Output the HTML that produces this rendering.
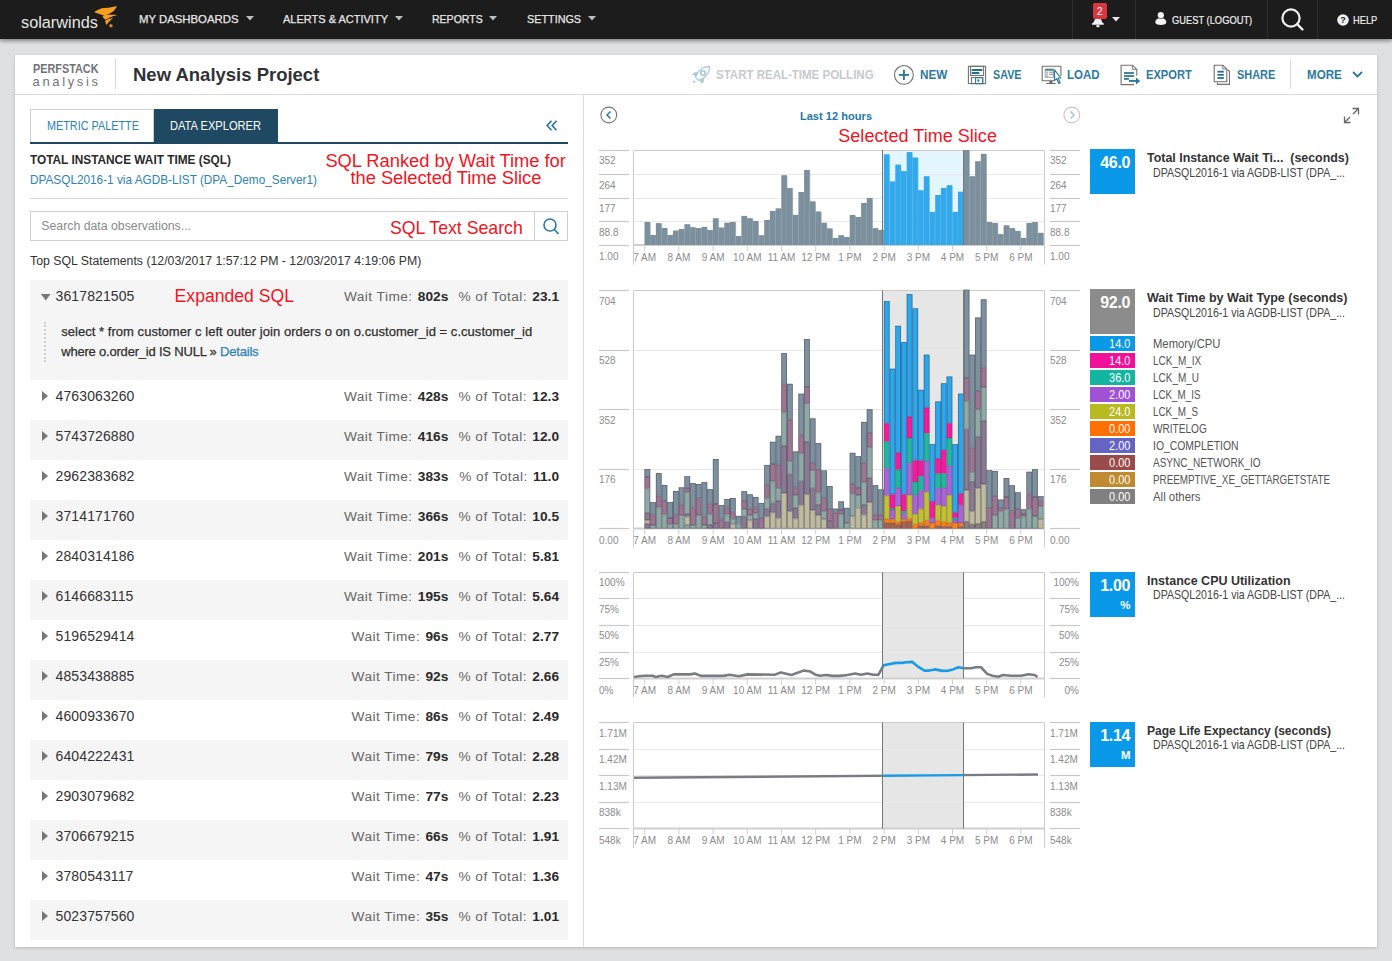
<!DOCTYPE html><html><head><meta charset="utf-8"><title>PerfStack</title>
<style>
html,body{margin:0;padding:0;}
body{width:1392px;height:961px;overflow:hidden;background:#dfe0e2;font-family:"Liberation Sans", sans-serif;position:relative;}
.t{position:absolute;white-space:pre;}
.r{position:absolute;}
svg{position:absolute;overflow:visible;}
</style></head><body>
<div class="r" style="left:0px;top:0px;width:1392px;height:39px;background:#1c1c1c;box-shadow:0 2px 4px rgba(0,0,0,0.42);"></div>
<div class="t" style="top:14.00px;font-size:16.3px;line-height:16.3px;color:#e6e6e6;font-weight:400;left:21px;">solarwinds</div>
<svg style="left:90px;top:2px" width="32" height="30" viewBox="0 0 32 30">
<path d="M4.06,10 C8,7.5 11,6 14,5.9 L18.4,5.8 C21,5.5 24,5 26.9,4.1 C26,6 25.2,7 24.6,7.9 C23.5,9 22.5,9.8 21.9,10.3 C20,11.5 19,12 17.5,12.5 C16,13 14.5,13.4 13.4,13.4 C11,12.5 9,11.8 7.8,11.6 Z" fill="#f5a01c"/>
<path d="M12.5,14.7 C14,13.3 15,12.8 16.9,12.8 C20,12.7 24,12.8 27.5,13 C25,13.8 23,14.2 21.9,14.7 C19,15.8 17,17 15.6,17.8 C14.5,17 13.5,15.8 12.5,14.7 Z" fill="#f5a01c"/>
<path d="M15,18.75 C18,17.5 20,16.8 23.1,16.1 C21.5,17.5 20,19 18.75,20 C17.8,21.2 17,22.2 16.25,23.1 C15.8,21.5 15.4,20 15,18.75 Z" fill="#f5a01c"/>
<circle cx="20.9" cy="23.75" r="1.8" fill="#c98419"/>
</svg>
<div class="t" style="top:14.00px;font-size:11.8px;line-height:11.8px;color:#e8e8e8;font-weight:400;transform:scaleX(0.9627);transform-origin:0 0;left:139px;-webkit-text-stroke:0.25px #e8e8e8;">MY DASHBOARDS</div>
<div class="t" style="top:14.00px;font-size:11.8px;line-height:11.8px;color:#e8e8e8;font-weight:400;transform:scaleX(0.9329);transform-origin:0 0;left:282.7px;-webkit-text-stroke:0.25px #e8e8e8;">ALERTS &amp; ACTIVITY</div>
<div class="t" style="top:14.00px;font-size:11.8px;line-height:11.8px;color:#e8e8e8;font-weight:400;transform:scaleX(0.8922);transform-origin:0 0;left:432.2px;-webkit-text-stroke:0.25px #e8e8e8;">REPORTS</div>
<div class="t" style="top:14.00px;font-size:11.8px;line-height:11.8px;color:#e8e8e8;font-weight:400;transform:scaleX(0.9169);transform-origin:0 0;left:527.4px;-webkit-text-stroke:0.25px #e8e8e8;">SETTINGS</div>
<svg style="left:245.7px;top:16px" width="8" height="5"><path d="M0 0 L8 0 L4 4.5Z" fill="#bdbdbd"/></svg>
<svg style="left:394.8px;top:16px" width="8" height="5"><path d="M0 0 L8 0 L4 4.5Z" fill="#bdbdbd"/></svg>
<svg style="left:489px;top:16px" width="8" height="5"><path d="M0 0 L8 0 L4 4.5Z" fill="#bdbdbd"/></svg>
<svg style="left:588px;top:16px" width="8" height="5"><path d="M0 0 L8 0 L4 4.5Z" fill="#bdbdbd"/></svg>
<div class="r" style="left:1072px;top:0px;width:1px;height:39px;background:#2e2e2e;"></div>
<div class="r" style="left:1135px;top:0px;width:1px;height:39px;background:#2e2e2e;"></div>
<div class="r" style="left:1267px;top:0px;width:1px;height:39px;background:#2e2e2e;"></div>
<div class="r" style="left:1317px;top:0px;width:1px;height:39px;background:#2e2e2e;"></div>
<div class="r" style="left:1093px;top:3px;width:13.5px;height:15.5px;background:#d9363e;border-radius:2px;"></div>
<div class="t" style="top:6.00px;font-size:10.5px;line-height:10.5px;color:#fff;font-weight:400;left:1099.75px;transform:translateX(-50%);">2</div>
<svg style="left:1092px;top:19px" width="12" height="9" viewBox="0 0 12 9">
<path d="M2.8 0.3 C4 0 8 0 9.2 0.3 C9.6 2 10 3.5 11.8 4.6 L11.8 5.8 L0 5.8 L0 4.6 C1.8 3.5 2.3 2 2.8 0.3Z" fill="#f2f2f2"/><ellipse cx="5.9" cy="7.1" rx="1.8" ry="1.2" fill="#f2f2f2"/></svg>
<svg style="left:1112px;top:16.5px" width="8" height="5"><path d="M0 0 L8 0 L4 4.5Z" fill="#e8e8e8"/></svg>
<svg style="left:1155px;top:12px" width="12" height="13" viewBox="0 0 12 13">
<circle cx="5.8" cy="3.2" r="3.1" fill="#f2f2f2"/><path d="M3.5 6.2 C4.8 6.9 6.8 6.9 8.1 6.2 C10.3 7 11.3 8.5 11.3 10.2 C11.3 12 9 12.9 5.8 12.9 C2.6 12.9 0.3 12 0.3 10.2 C0.3 8.5 1.3 7 3.5 6.2Z" fill="#f2f2f2"/></svg>
<div class="t" style="top:15.00px;font-size:11px;line-height:11px;color:#f0f0f0;font-weight:400;transform:scaleX(0.8484);transform-origin:0 0;left:1171.8px;-webkit-text-stroke:0.2px #f0f0f0;">GUEST (LOGOUT)</div>
<svg style="left:1281px;top:8px" width="24" height="24" viewBox="0 0 24 24">
<circle cx="10" cy="10" r="8.6" fill="none" stroke="#f0f0f0" stroke-width="2.2"/><line x1="16.2" y1="16.2" x2="21.5" y2="21.5" stroke="#f0f0f0" stroke-width="2.4" stroke-linecap="round"/></svg>
<svg style="left:1337px;top:13.5px" width="12" height="12" viewBox="0 0 12 12">
<circle cx="6" cy="6" r="5.8" fill="#f0f0f0"/><text x="6" y="9.2" font-family="Liberation Sans" font-weight="700" font-size="9" text-anchor="middle" fill="#1c1c1c">?</text></svg>
<div class="t" style="top:15.00px;font-size:11px;line-height:11px;color:#f0f0f0;font-weight:400;transform:scaleX(0.8452);transform-origin:0 0;left:1352.7px;-webkit-text-stroke:0.2px #f0f0f0;">HELP</div>
<div class="r" style="left:15px;top:55px;width:1362px;height:892px;background:#fff;box-shadow:0 1px 3px rgba(0,0,0,0.18);"></div>
<div class="r" style="left:15px;top:94px;width:1362px;height:1px;background:#dcdcdc;"></div>
<div class="t" style="top:63.00px;font-size:12.5px;line-height:12.5px;color:#6f7378;font-weight:700;transform:scaleX(0.8679);transform-origin:0 0;left:32.5px;">PERFSTACK</div>
<div class="t" style="top:75.00px;font-size:13px;line-height:13px;color:#6f7378;font-weight:400;letter-spacing:2.65px;left:32.5px;">analysis</div>
<div class="r" style="left:115px;top:59px;width:1px;height:30px;background:#d6d6d6;"></div>
<div class="t" style="top:66.00px;font-size:18.4px;line-height:18.4px;color:#303336;font-weight:700;transform:scaleX(1.0052);transform-origin:0 0;left:132.5px;">New Analysis Project</div>
<div class="t" style="top:68.00px;font-size:13px;line-height:13px;color:#c5cacd;font-weight:700;transform:scaleX(0.8847);transform-origin:0 0;left:716px;">START REAL-TIME POLLING</div>
<svg style="left:690px;top:64px" width="22" height="22" viewBox="690 64 22 22"><path d="M709.6 66.6 C705 66.6 700.5 68.5 698.2 72 L695.4 77.1 L698.6 80.5 L703.5 78 C707.5 75.5 709.6 71 709.6 66.6 Z" fill="none" stroke="#a6cad6" stroke-width="1.25" stroke-linejoin="round"/>
<circle cx="703" cy="73" r="2.3" fill="none" stroke="#a6cad6" stroke-width="1.6"/>
<path d="M692.2 74.5 L694.7 72.3 L697.9 72.3 L696.2 76.3 Z" fill="#a6cad6"/><path d="M700 80 L703.8 78.3 L703.8 81.6 L701.4 83.9 Z" fill="#a6cad6"/>
<path d="M693.1 80 L693.1 82.8 L696.3 82.2 Z" fill="#a6cad6"/></svg>
<div class="t" style="top:68.00px;font-size:13px;line-height:13px;color:#2b7a9e;font-weight:700;transform:scaleX(0.9030);transform-origin:0 0;left:919.6px;">NEW</div>
<svg style="left:892px;top:63px" width="24" height="24" viewBox="892 63 24 24"><circle cx="903.9" cy="74.9" r="9.4" fill="none" stroke="#707070" stroke-width="1.1"/>
<line x1="903.9" y1="69.8" x2="903.9" y2="80" stroke="#2b7a9e" stroke-width="1.9"/><line x1="898.8" y1="74.9" x2="909" y2="74.9" stroke="#2b7a9e" stroke-width="1.9"/></svg>
<div class="t" style="top:68.00px;font-size:13px;line-height:13px;color:#2b7a9e;font-weight:700;transform:scaleX(0.8276);transform-origin:0 0;left:992.5px;">SAVE</div>
<svg style="left:966px;top:64px" width="22" height="22" viewBox="966 64 22 22"><rect x="968.4" y="66.3" width="17.2" height="17.3" fill="none" stroke="#707070" stroke-width="1.05"/>
<rect x="970.6" y="66.3" width="13" height="9.2" fill="none" stroke="#707070" stroke-width="1.05"/>
<line x1="972.4" y1="70" x2="981.7" y2="70" stroke="#1f6f92" stroke-width="1.8" stroke-linecap="round"/><line x1="972.4" y1="73" x2="978.7" y2="73" stroke="#1f6f92" stroke-width="1.8" stroke-linecap="round"/>
<rect x="971.5" y="77.6" width="11.2" height="6" fill="none" stroke="#707070" stroke-width="1.05"/>
<rect x="975.6" y="77.6" width="7.1" height="6" fill="none" stroke="#2b7a9e" stroke-width="1.1"/><rect x="977.5" y="79.4" width="1.8" height="2.3" fill="#1f6f92"/></svg>
<div class="t" style="top:68.00px;font-size:13px;line-height:13px;color:#2b7a9e;font-weight:700;transform:scaleX(0.8848);transform-origin:0 0;left:1067px;">LOAD</div>
<svg style="left:1040px;top:64px" width="24" height="22" viewBox="1040 64 24 22"><path d="M1054 80.7 L1042.2 80.7 L1042.2 66.2 L1060.9 66.2 L1060.9 76" fill="none" stroke="#707070" stroke-width="1.1"/>
<rect x="1049.3" y="80.7" width="3.2" height="2.6" fill="#707070"/><line x1="1046.2" y1="83.5" x2="1055.7" y2="83.5" stroke="#707070" stroke-width="1.1"/>
<rect x="1045.2" y="69" width="8" height="1.7" fill="#2b7a9e"/><rect x="1045.2" y="69" width="8.3" height="8.2" fill="none" stroke="#8a8a8a" stroke-width="0.8"/>
<line x1="1046.3" y1="72.2" x2="1048.2" y2="72.2" stroke="#777" stroke-width="0.9"/><line x1="1049.2" y1="72.2" x2="1053" y2="72.2" stroke="#777" stroke-width="0.9"/>
<line x1="1046.3" y1="74.3" x2="1048.2" y2="74.3" stroke="#777" stroke-width="0.9"/><line x1="1049.2" y1="74.3" x2="1053" y2="74.3" stroke="#777" stroke-width="0.9"/>
<line x1="1046.3" y1="76.3" x2="1048.2" y2="76.3" stroke="#777" stroke-width="0.9"/>
<path d="M1054.5 69.8 L1054.5 80.6 L1056.6 78.6 L1058.8 83.5 L1060.2 82.9 L1058.1 78 L1060.9 78 Z" fill="#fff" stroke="#2b7a9e" stroke-width="1.15" stroke-linejoin="round"/></svg>
<div class="t" style="top:68.00px;font-size:13px;line-height:13px;color:#2b7a9e;font-weight:700;transform:scaleX(0.8547);transform-origin:0 0;left:1145.7px;">EXPORT</div>
<svg style="left:1119px;top:63px" width="24" height="24" viewBox="1119 63 24 24"><path d="M1136.8 75.7 L1136.8 69.4 L1132.5 65.2 L1121.1 65.2 L1121.1 84.6 L1134 84.6" fill="none" stroke="#707070" stroke-width="1.1"/>
<path d="M1132.5 65.2 L1132.5 69.4 L1136.8 69.4" fill="none" stroke="#707070" stroke-width="0.9"/>
<line x1="1124" y1="73" x2="1133.9" y2="73" stroke="#1f6f92" stroke-width="1.7"/><line x1="1124" y1="76" x2="1133.9" y2="76" stroke="#1f6f92" stroke-width="1.7"/>
<line x1="1124" y1="78.9" x2="1128.9" y2="78.9" stroke="#1f6f92" stroke-width="1.7"/>
<line x1="1128.9" y1="80.9" x2="1136.5" y2="80.9" stroke="#2b7a9e" stroke-width="2"/><path d="M1136 77.4 L1140.2 80.9 L1136 84.4 Z" fill="#2b7a9e"/></svg>
<div class="t" style="top:68.00px;font-size:13px;line-height:13px;color:#2b7a9e;font-weight:700;transform:scaleX(0.8415);transform-origin:0 0;left:1236.7px;">SHARE</div>
<svg style="left:1212px;top:63px" width="20" height="24" viewBox="1212 63 20 24"><path d="M1222.8 65.2 L1214.2 65.2 L1214.2 81.7 L1226.8 81.7 L1226.8 69 Z" fill="none" stroke="#707070" stroke-width="1.1"/>
<path d="M1222.8 65.2 L1222.8 69 L1226.8 69" fill="none" stroke="#707070" stroke-width="0.9"/>
<path d="M1227.5 69.8 L1229.5 71.3 L1229.5 84.4 L1217.4 84.4 L1217.4 82.6" fill="none" stroke="#707070" stroke-width="1.1"/>
<line x1="1217.4" y1="71.7" x2="1223.8" y2="71.7" stroke="#1f6f92" stroke-width="1.8"/><line x1="1217.4" y1="74.8" x2="1223.8" y2="74.8" stroke="#1f6f92" stroke-width="1.8"/><line x1="1217.4" y1="78" x2="1223.8" y2="78" stroke="#1f6f92" stroke-width="1.8"/></svg>
<div class="r" style="left:1290px;top:59px;width:1px;height:30px;background:#dcdcdc;"></div>
<div class="t" style="top:68.00px;font-size:13px;line-height:13px;color:#2b7a9e;font-weight:700;transform:scaleX(0.8923);transform-origin:0 0;left:1307px;">MORE</div>
<svg style="left:1352px;top:71px" width="11" height="7"><path d="M1 1 L5.5 5.5 L10 1" fill="none" stroke="#2b7a9e" stroke-width="1.8"/></svg>
<div class="r" style="left:583px;top:95px;width:1px;height:852px;background:#dcdcdc;"></div>
<div class="r" style="left:30px;top:109px;width:124px;height:33px;background:#fff;box-sizing:border-box;border:1px solid #d0d0d0;border-bottom:none;"></div>
<div class="r" style="left:154px;top:109px;width:124px;height:33px;background:#1f4863;"></div>
<div class="r" style="left:30px;top:141.5px;width:538px;height:2.5px;background:#1f4863;"></div>
<div class="t" style="top:119.00px;font-size:13px;line-height:13px;color:#2e82b5;font-weight:400;transform:scaleX(0.8333);transform-origin:0 0;left:46.8px;">METRIC PALETTE</div>
<div class="t" style="top:119.00px;font-size:13px;line-height:13px;color:#ffffff;font-weight:400;transform:scaleX(0.8550);transform-origin:0 0;left:170px;">DATA EXPLORER</div>
<svg style="left:546px;top:120px" width="12" height="11" viewBox="0 0 12 11"><path d="M5.5 0.8 L1.2 5.5 L5.5 10.2 M10.5 0.8 L6.2 5.5 L10.5 10.2" fill="none" stroke="#2b7a9e" stroke-width="1.7"/></svg>
<div class="t" style="top:154.00px;font-size:12.1px;line-height:12.1px;color:#2a2a2a;font-weight:700;transform:scaleX(0.9788);transform-origin:0 0;left:30px;">TOTAL INSTANCE WAIT TIME (SQL)</div>
<div class="t" style="top:174.00px;font-size:12.1px;line-height:12.1px;color:#2e82b5;font-weight:400;transform:scaleX(0.9748);transform-origin:0 0;left:30px;">DPASQL2016-1 via AGDB-LIST (DPA_Demo_Server1)</div>
<div class="r" style="left:30px;top:197.5px;width:538px;height:1px;background:#d8d8d8;"></div>
<div class="t" style="top:152.00px;font-size:18.3px;line-height:18.3px;color:#f0141e;font-weight:400;left:325.4px;">SQL Ranked by Wait Time for</div>
<div class="t" style="top:169.00px;font-size:18.3px;line-height:18.3px;color:#f0141e;font-weight:400;left:350.4px;">the Selected Time Slice</div>
<div class="r" style="left:30px;top:211px;width:538px;height:30px;background:#fff;box-sizing:border-box;border:1px solid #d0d0d0;"></div>
<div class="r" style="left:534px;top:211px;width:1px;height:30px;background:#d0d0d0;"></div>
<div class="t" style="top:220.00px;font-size:12.3px;line-height:12.3px;color:#8a8a8a;font-weight:400;left:41.3px;">Search data observations...</div>
<div class="t" style="top:220.00px;font-size:17.7px;line-height:17.7px;color:#f0141e;font-weight:400;left:390px;">SQL Text Search</div>
<svg style="left:543px;top:218px" width="17" height="18" viewBox="0 0 17 18"><circle cx="7" cy="7" r="6" fill="none" stroke="#2b7a9e" stroke-width="1.6"/><line x1="11.3" y1="11.5" x2="15.5" y2="16" stroke="#2b7a9e" stroke-width="1.8"/></svg>
<div class="t" style="top:255.00px;font-size:12.3px;line-height:12.3px;color:#333;font-weight:400;left:30px;">Top SQL Statements (12/03/2017 1:57:12 PM - 12/03/2017 4:19:06 PM)</div>
<div class="r" style="left:30px;top:280px;width:538px;height:100px;background:#f5f5f5;"></div>
<svg style="left:40.5px;top:293.5px" width="10" height="7"><path d="M0 0 L9.5 0 L4.75 6.5Z" fill="#777"/></svg>
<div class="t" style="top:289.00px;font-size:14px;line-height:14px;color:#333;font-weight:400;letter-spacing:0.1px;left:55.6px;">3617821505</div>
<div class="t" style="top:290.00px;font-size:13.7px;line-height:13.7px;color:#666;font-weight:400;right:943.7px;"><span style="letter-spacing:0.45px">Wait Time:</span><b style="margin-left:5.3px;color:#2a2a2a">802s</b></div>
<div class="t" style="top:290.00px;font-size:13.7px;line-height:13.7px;color:#666;font-weight:400;right:833px;"><span style="letter-spacing:0.45px">% of Total:</span><b style="margin-left:5.3px;color:#2a2a2a">23.1</b></div>
<svg style="left:42px;top:391px" width="7" height="11"><path d="M0 0 L6 5 L0 10Z" fill="#777"/></svg>
<div class="t" style="top:389.00px;font-size:14px;line-height:14px;color:#333;font-weight:400;letter-spacing:0.1px;left:55.6px;">4763063260</div>
<div class="t" style="top:390.00px;font-size:13.7px;line-height:13.7px;color:#666;font-weight:400;right:943.7px;"><span style="letter-spacing:0.45px">Wait Time:</span><b style="margin-left:5.3px;color:#2a2a2a">428s</b></div>
<div class="t" style="top:390.00px;font-size:13.7px;line-height:13.7px;color:#666;font-weight:400;right:833px;"><span style="letter-spacing:0.45px">% of Total:</span><b style="margin-left:5.3px;color:#2a2a2a">12.3</b></div>
<div class="r" style="left:30px;top:420px;width:538px;height:40px;background:#f5f5f5;"></div>
<svg style="left:42px;top:431px" width="7" height="11"><path d="M0 0 L6 5 L0 10Z" fill="#777"/></svg>
<div class="t" style="top:429.00px;font-size:14px;line-height:14px;color:#333;font-weight:400;letter-spacing:0.1px;left:55.6px;">5743726880</div>
<div class="t" style="top:430.00px;font-size:13.7px;line-height:13.7px;color:#666;font-weight:400;right:943.7px;"><span style="letter-spacing:0.45px">Wait Time:</span><b style="margin-left:5.3px;color:#2a2a2a">416s</b></div>
<div class="t" style="top:430.00px;font-size:13.7px;line-height:13.7px;color:#666;font-weight:400;right:833px;"><span style="letter-spacing:0.45px">% of Total:</span><b style="margin-left:5.3px;color:#2a2a2a">12.0</b></div>
<svg style="left:42px;top:471px" width="7" height="11"><path d="M0 0 L6 5 L0 10Z" fill="#777"/></svg>
<div class="t" style="top:469.00px;font-size:14px;line-height:14px;color:#333;font-weight:400;letter-spacing:0.1px;left:55.6px;">2962383682</div>
<div class="t" style="top:470.00px;font-size:13.7px;line-height:13.7px;color:#666;font-weight:400;right:943.7px;"><span style="letter-spacing:0.45px">Wait Time:</span><b style="margin-left:5.3px;color:#2a2a2a">383s</b></div>
<div class="t" style="top:470.00px;font-size:13.7px;line-height:13.7px;color:#666;font-weight:400;right:833px;"><span style="letter-spacing:0.45px">% of Total:</span><b style="margin-left:5.3px;color:#2a2a2a">11.0</b></div>
<div class="r" style="left:30px;top:500px;width:538px;height:40px;background:#f5f5f5;"></div>
<svg style="left:42px;top:511px" width="7" height="11"><path d="M0 0 L6 5 L0 10Z" fill="#777"/></svg>
<div class="t" style="top:509.00px;font-size:14px;line-height:14px;color:#333;font-weight:400;letter-spacing:0.1px;left:55.6px;">3714171760</div>
<div class="t" style="top:510.00px;font-size:13.7px;line-height:13.7px;color:#666;font-weight:400;right:943.7px;"><span style="letter-spacing:0.45px">Wait Time:</span><b style="margin-left:5.3px;color:#2a2a2a">366s</b></div>
<div class="t" style="top:510.00px;font-size:13.7px;line-height:13.7px;color:#666;font-weight:400;right:833px;"><span style="letter-spacing:0.45px">% of Total:</span><b style="margin-left:5.3px;color:#2a2a2a">10.5</b></div>
<svg style="left:42px;top:551px" width="7" height="11"><path d="M0 0 L6 5 L0 10Z" fill="#777"/></svg>
<div class="t" style="top:549.00px;font-size:14px;line-height:14px;color:#333;font-weight:400;letter-spacing:0.1px;left:55.6px;">2840314186</div>
<div class="t" style="top:550.00px;font-size:13.7px;line-height:13.7px;color:#666;font-weight:400;right:943.7px;"><span style="letter-spacing:0.45px">Wait Time:</span><b style="margin-left:5.3px;color:#2a2a2a">201s</b></div>
<div class="t" style="top:550.00px;font-size:13.7px;line-height:13.7px;color:#666;font-weight:400;right:833px;"><span style="letter-spacing:0.45px">% of Total:</span><b style="margin-left:5.3px;color:#2a2a2a">5.81</b></div>
<div class="r" style="left:30px;top:580px;width:538px;height:40px;background:#f5f5f5;"></div>
<svg style="left:42px;top:591px" width="7" height="11"><path d="M0 0 L6 5 L0 10Z" fill="#777"/></svg>
<div class="t" style="top:589.00px;font-size:14px;line-height:14px;color:#333;font-weight:400;letter-spacing:0.1px;left:55.6px;">6146683115</div>
<div class="t" style="top:590.00px;font-size:13.7px;line-height:13.7px;color:#666;font-weight:400;right:943.7px;"><span style="letter-spacing:0.45px">Wait Time:</span><b style="margin-left:5.3px;color:#2a2a2a">195s</b></div>
<div class="t" style="top:590.00px;font-size:13.7px;line-height:13.7px;color:#666;font-weight:400;right:833px;"><span style="letter-spacing:0.45px">% of Total:</span><b style="margin-left:5.3px;color:#2a2a2a">5.64</b></div>
<svg style="left:42px;top:631px" width="7" height="11"><path d="M0 0 L6 5 L0 10Z" fill="#777"/></svg>
<div class="t" style="top:629.00px;font-size:14px;line-height:14px;color:#333;font-weight:400;letter-spacing:0.1px;left:55.6px;">5196529414</div>
<div class="t" style="top:630.00px;font-size:13.7px;line-height:13.7px;color:#666;font-weight:400;right:943.7px;"><span style="letter-spacing:0.45px">Wait Time:</span><b style="margin-left:5.3px;color:#2a2a2a">96s</b></div>
<div class="t" style="top:630.00px;font-size:13.7px;line-height:13.7px;color:#666;font-weight:400;right:833px;"><span style="letter-spacing:0.45px">% of Total:</span><b style="margin-left:5.3px;color:#2a2a2a">2.77</b></div>
<div class="r" style="left:30px;top:660px;width:538px;height:40px;background:#f5f5f5;"></div>
<svg style="left:42px;top:671px" width="7" height="11"><path d="M0 0 L6 5 L0 10Z" fill="#777"/></svg>
<div class="t" style="top:669.00px;font-size:14px;line-height:14px;color:#333;font-weight:400;letter-spacing:0.1px;left:55.6px;">4853438885</div>
<div class="t" style="top:670.00px;font-size:13.7px;line-height:13.7px;color:#666;font-weight:400;right:943.7px;"><span style="letter-spacing:0.45px">Wait Time:</span><b style="margin-left:5.3px;color:#2a2a2a">92s</b></div>
<div class="t" style="top:670.00px;font-size:13.7px;line-height:13.7px;color:#666;font-weight:400;right:833px;"><span style="letter-spacing:0.45px">% of Total:</span><b style="margin-left:5.3px;color:#2a2a2a">2.66</b></div>
<svg style="left:42px;top:711px" width="7" height="11"><path d="M0 0 L6 5 L0 10Z" fill="#777"/></svg>
<div class="t" style="top:709.00px;font-size:14px;line-height:14px;color:#333;font-weight:400;letter-spacing:0.1px;left:55.6px;">4600933670</div>
<div class="t" style="top:710.00px;font-size:13.7px;line-height:13.7px;color:#666;font-weight:400;right:943.7px;"><span style="letter-spacing:0.45px">Wait Time:</span><b style="margin-left:5.3px;color:#2a2a2a">86s</b></div>
<div class="t" style="top:710.00px;font-size:13.7px;line-height:13.7px;color:#666;font-weight:400;right:833px;"><span style="letter-spacing:0.45px">% of Total:</span><b style="margin-left:5.3px;color:#2a2a2a">2.49</b></div>
<div class="r" style="left:30px;top:740px;width:538px;height:40px;background:#f5f5f5;"></div>
<svg style="left:42px;top:751px" width="7" height="11"><path d="M0 0 L6 5 L0 10Z" fill="#777"/></svg>
<div class="t" style="top:749.00px;font-size:14px;line-height:14px;color:#333;font-weight:400;letter-spacing:0.1px;left:55.6px;">6404222431</div>
<div class="t" style="top:750.00px;font-size:13.7px;line-height:13.7px;color:#666;font-weight:400;right:943.7px;"><span style="letter-spacing:0.45px">Wait Time:</span><b style="margin-left:5.3px;color:#2a2a2a">79s</b></div>
<div class="t" style="top:750.00px;font-size:13.7px;line-height:13.7px;color:#666;font-weight:400;right:833px;"><span style="letter-spacing:0.45px">% of Total:</span><b style="margin-left:5.3px;color:#2a2a2a">2.28</b></div>
<svg style="left:42px;top:791px" width="7" height="11"><path d="M0 0 L6 5 L0 10Z" fill="#777"/></svg>
<div class="t" style="top:789.00px;font-size:14px;line-height:14px;color:#333;font-weight:400;letter-spacing:0.1px;left:55.6px;">2903079682</div>
<div class="t" style="top:790.00px;font-size:13.7px;line-height:13.7px;color:#666;font-weight:400;right:943.7px;"><span style="letter-spacing:0.45px">Wait Time:</span><b style="margin-left:5.3px;color:#2a2a2a">77s</b></div>
<div class="t" style="top:790.00px;font-size:13.7px;line-height:13.7px;color:#666;font-weight:400;right:833px;"><span style="letter-spacing:0.45px">% of Total:</span><b style="margin-left:5.3px;color:#2a2a2a">2.23</b></div>
<div class="r" style="left:30px;top:820px;width:538px;height:40px;background:#f5f5f5;"></div>
<svg style="left:42px;top:831px" width="7" height="11"><path d="M0 0 L6 5 L0 10Z" fill="#777"/></svg>
<div class="t" style="top:829.00px;font-size:14px;line-height:14px;color:#333;font-weight:400;letter-spacing:0.1px;left:55.6px;">3706679215</div>
<div class="t" style="top:830.00px;font-size:13.7px;line-height:13.7px;color:#666;font-weight:400;right:943.7px;"><span style="letter-spacing:0.45px">Wait Time:</span><b style="margin-left:5.3px;color:#2a2a2a">66s</b></div>
<div class="t" style="top:830.00px;font-size:13.7px;line-height:13.7px;color:#666;font-weight:400;right:833px;"><span style="letter-spacing:0.45px">% of Total:</span><b style="margin-left:5.3px;color:#2a2a2a">1.91</b></div>
<svg style="left:42px;top:871px" width="7" height="11"><path d="M0 0 L6 5 L0 10Z" fill="#777"/></svg>
<div class="t" style="top:869.00px;font-size:14px;line-height:14px;color:#333;font-weight:400;letter-spacing:0.1px;left:55.6px;">3780543117</div>
<div class="t" style="top:870.00px;font-size:13.7px;line-height:13.7px;color:#666;font-weight:400;right:943.7px;"><span style="letter-spacing:0.45px">Wait Time:</span><b style="margin-left:5.3px;color:#2a2a2a">47s</b></div>
<div class="t" style="top:870.00px;font-size:13.7px;line-height:13.7px;color:#666;font-weight:400;right:833px;"><span style="letter-spacing:0.45px">% of Total:</span><b style="margin-left:5.3px;color:#2a2a2a">1.36</b></div>
<div class="r" style="left:30px;top:900px;width:538px;height:40px;background:#f5f5f5;"></div>
<svg style="left:42px;top:911px" width="7" height="11"><path d="M0 0 L6 5 L0 10Z" fill="#777"/></svg>
<div class="t" style="top:909.00px;font-size:14px;line-height:14px;color:#333;font-weight:400;letter-spacing:0.1px;left:55.6px;">5023757560</div>
<div class="t" style="top:910.00px;font-size:13.7px;line-height:13.7px;color:#666;font-weight:400;right:943.7px;"><span style="letter-spacing:0.45px">Wait Time:</span><b style="margin-left:5.3px;color:#2a2a2a">35s</b></div>
<div class="t" style="top:910.00px;font-size:13.7px;line-height:13.7px;color:#666;font-weight:400;right:833px;"><span style="letter-spacing:0.45px">% of Total:</span><b style="margin-left:5.3px;color:#2a2a2a">1.01</b></div>
<div class="t" style="top:288.00px;font-size:17.6px;line-height:17.6px;color:#f0141e;font-weight:400;left:174.6px;">Expanded SQL</div>
<div class="r" style="left:44px;top:322px;width:0;height:40px;border-left:2px dotted #cfcfcf;"></div>
<div class="t" style="top:325.00px;font-size:13px;line-height:13px;color:#2f2f2f;font-weight:400;letter-spacing:0.04px;left:61.2px;-webkit-text-stroke:0.25px #2f2f2f;">select * from customer c left outer join orders o on o.customer_id = c.customer_id</div>
<div class="t" style="top:345.00px;font-size:13px;line-height:13px;color:#2f2f2f;font-weight:400;letter-spacing:-0.2px;left:61.2px;-webkit-text-stroke:0.25px currentColor;">where o.order_id IS NULL » <span style="color:#2e82b5">Details</span></div>
<svg style="left:600px;top:106px" width="18" height="18" viewBox="0 0 18 18"><circle cx="8.8" cy="9" r="7.9" fill="none" stroke="#777" stroke-width="1.1"/><path d="M10.5 5.5 L7 9 L10.5 12.5" fill="none" stroke="#2b7a9e" stroke-width="1.5"/></svg>
<svg style="left:1063px;top:106px" width="18" height="18" viewBox="0 0 18 18"><circle cx="8.8" cy="9" r="7.9" fill="none" stroke="#c8c8c8" stroke-width="1.1"/><path d="M7.5 5.5 L11 9 L7.5 12.5" fill="none" stroke="#a9c8d6" stroke-width="1.5"/></svg>
<div class="t" style="top:111.00px;font-size:11px;line-height:11px;color:#2377a5;font-weight:700;letter-spacing:0.05px;left:799.9px;">Last 12 hours</div>
<div class="t" style="top:127.00px;font-size:18px;line-height:18px;color:#f0141e;font-weight:400;letter-spacing:0.03px;left:838.3px;">Selected Time Slice</div>
<svg style="left:1343px;top:107px" width="17" height="17" viewBox="0 0 17 17"><path d="M9.5 1.5 L15.5 1.5 L15.5 7.5 M15.5 1.5 L10 7 M7.5 15.5 L1.5 15.5 L1.5 9.5 M1.5 15.5 L7 10" fill="none" stroke="#666" stroke-width="1.3"/></svg>
<svg style="left:584px;top:95px" width="793" height="852" viewBox="584 95 793 852"><style>.ax{font-family:"Liberation Sans",sans-serif;font-size:10px;fill:#8c8c8c}</style><rect x="882.5" y="150" width="81.0" height="95" fill="#e3f6fd"/><line x1="599" y1="150.5" x2="629" y2="150.5" stroke="#c8c8c8" stroke-width="1.2"/><line x1="1050" y1="150.5" x2="1080" y2="150.5" stroke="#c8c8c8" stroke-width="1.2"/><line x1="599" y1="174.5" x2="629" y2="174.5" stroke="#c8c8c8" stroke-width="1.2"/><line x1="1050" y1="174.5" x2="1080" y2="174.5" stroke="#c8c8c8" stroke-width="1.2"/><line x1="599" y1="198.5" x2="629" y2="198.5" stroke="#c8c8c8" stroke-width="1.2"/><line x1="1050" y1="198.5" x2="1080" y2="198.5" stroke="#c8c8c8" stroke-width="1.2"/><line x1="599" y1="221.5" x2="629" y2="221.5" stroke="#c8c8c8" stroke-width="1.2"/><line x1="1050" y1="221.5" x2="1080" y2="221.5" stroke="#c8c8c8" stroke-width="1.2"/><line x1="599" y1="245.5" x2="629" y2="245.5" stroke="#c8c8c8" stroke-width="1.2"/><line x1="1050" y1="245.5" x2="1080" y2="245.5" stroke="#c8c8c8" stroke-width="1.2"/><line x1="634" y1="174.5" x2="1044.5" y2="174.5" stroke="#e9e9e9" stroke-width="1"/><line x1="634" y1="198.5" x2="1044.5" y2="198.5" stroke="#e9e9e9" stroke-width="1"/><line x1="634" y1="221.5" x2="1044.5" y2="221.5" stroke="#e9e9e9" stroke-width="1"/><line x1="634" y1="150.5" x2="1044.5" y2="150.5" stroke="#cccccc" stroke-width="1.1"/><line x1="633.5" y1="150.5" x2="633.5" y2="264.5" stroke="#cccccc" stroke-width="1.1"/><line x1="1044.5" y1="150.5" x2="1044.5" y2="264.5" stroke="#cccccc" stroke-width="1.1"/><text x="599" y="164" class="ax">352</text><text x="1050" y="164" class="ax">352</text><text x="599" y="188.5" class="ax">264</text><text x="1050" y="188.5" class="ax">264</text><text x="599" y="212" class="ax">177</text><text x="1050" y="212" class="ax">177</text><text x="599" y="235.5" class="ax">88.8</text><text x="1050" y="235.5" class="ax">88.8</text><text x="599" y="260" class="ax">1.00</text><text x="1050" y="260" class="ax">1.00</text><line x1="634" y1="245" x2="1044.5" y2="245" stroke="#cfcfcf" stroke-width="2"/><rect x="644.50" y="221.9" width="5.70" height="23.10" fill="#7b8f9c"/><line x1="650.20" y1="222.9" x2="650.20" y2="245" stroke="#8ea4b3" stroke-width="0.6"/><rect x="650.20" y="235" width="5.70" height="10.00" fill="#7b8f9c"/><line x1="655.90" y1="236" x2="655.90" y2="245" stroke="#8ea4b3" stroke-width="0.6"/><rect x="655.90" y="223.1" width="5.70" height="21.90" fill="#7b8f9c"/><line x1="661.60" y1="224.1" x2="661.60" y2="245" stroke="#8ea4b3" stroke-width="0.6"/><rect x="661.60" y="228" width="5.70" height="17.00" fill="#7b8f9c"/><line x1="667.30" y1="229" x2="667.30" y2="245" stroke="#8ea4b3" stroke-width="0.6"/><rect x="667.30" y="235" width="5.70" height="10.00" fill="#7b8f9c"/><line x1="673.00" y1="236" x2="673.00" y2="245" stroke="#8ea4b3" stroke-width="0.6"/><rect x="673.00" y="230.5" width="5.70" height="14.50" fill="#7b8f9c"/><line x1="678.70" y1="231.5" x2="678.70" y2="245" stroke="#8ea4b3" stroke-width="0.6"/><rect x="678.70" y="229" width="5.70" height="16.00" fill="#7b8f9c"/><line x1="684.40" y1="230" x2="684.40" y2="245" stroke="#8ea4b3" stroke-width="0.6"/><rect x="684.40" y="224.2" width="5.70" height="20.80" fill="#7b8f9c"/><line x1="690.10" y1="225.2" x2="690.10" y2="245" stroke="#8ea4b3" stroke-width="0.6"/><rect x="690.10" y="227.2" width="5.70" height="17.80" fill="#7b8f9c"/><line x1="695.80" y1="228.2" x2="695.80" y2="245" stroke="#8ea4b3" stroke-width="0.6"/><rect x="695.80" y="228" width="5.70" height="17.00" fill="#7b8f9c"/><line x1="701.50" y1="229" x2="701.50" y2="245" stroke="#8ea4b3" stroke-width="0.6"/><rect x="701.50" y="226.9" width="5.70" height="18.10" fill="#7b8f9c"/><line x1="707.20" y1="227.9" x2="707.20" y2="245" stroke="#8ea4b3" stroke-width="0.6"/><rect x="707.20" y="230" width="5.70" height="15.00" fill="#7b8f9c"/><line x1="712.90" y1="231" x2="712.90" y2="245" stroke="#8ea4b3" stroke-width="0.6"/><rect x="712.90" y="218.2" width="5.70" height="26.80" fill="#7b8f9c"/><line x1="718.60" y1="219.2" x2="718.60" y2="245" stroke="#8ea4b3" stroke-width="0.6"/><rect x="718.60" y="227.5" width="5.70" height="17.50" fill="#7b8f9c"/><line x1="724.30" y1="228.5" x2="724.30" y2="245" stroke="#8ea4b3" stroke-width="0.6"/><rect x="724.30" y="222.7" width="5.70" height="22.30" fill="#7b8f9c"/><line x1="730.00" y1="223.7" x2="730.00" y2="245" stroke="#8ea4b3" stroke-width="0.6"/><rect x="730.00" y="221.9" width="5.70" height="23.10" fill="#7b8f9c"/><line x1="735.70" y1="222.9" x2="735.70" y2="245" stroke="#8ea4b3" stroke-width="0.6"/><rect x="735.70" y="236" width="5.70" height="9.00" fill="#7b8f9c"/><line x1="741.40" y1="237" x2="741.40" y2="245" stroke="#8ea4b3" stroke-width="0.6"/><rect x="741.40" y="215.9" width="5.70" height="29.10" fill="#7b8f9c"/><line x1="747.10" y1="216.9" x2="747.10" y2="245" stroke="#8ea4b3" stroke-width="0.6"/><rect x="747.10" y="218.2" width="5.70" height="26.80" fill="#7b8f9c"/><line x1="752.80" y1="219.2" x2="752.80" y2="245" stroke="#8ea4b3" stroke-width="0.6"/><rect x="752.80" y="220.9" width="5.70" height="24.10" fill="#7b8f9c"/><line x1="758.50" y1="221.9" x2="758.50" y2="245" stroke="#8ea4b3" stroke-width="0.6"/><rect x="758.50" y="235.2" width="5.70" height="9.80" fill="#7b8f9c"/><line x1="764.20" y1="236.2" x2="764.20" y2="245" stroke="#8ea4b3" stroke-width="0.6"/><rect x="764.20" y="220" width="5.70" height="25.00" fill="#7b8f9c"/><line x1="769.90" y1="221" x2="769.90" y2="245" stroke="#8ea4b3" stroke-width="0.6"/><rect x="769.90" y="210.9" width="5.70" height="34.10" fill="#7b8f9c"/><line x1="775.60" y1="211.9" x2="775.60" y2="245" stroke="#8ea4b3" stroke-width="0.6"/><rect x="775.60" y="208.3" width="5.70" height="36.70" fill="#7b8f9c"/><line x1="781.30" y1="209.3" x2="781.30" y2="245" stroke="#8ea4b3" stroke-width="0.6"/><rect x="781.30" y="175.2" width="5.70" height="69.80" fill="#7b8f9c"/><line x1="787.00" y1="176.2" x2="787.00" y2="245" stroke="#8ea4b3" stroke-width="0.6"/><rect x="787.00" y="188" width="5.70" height="57.00" fill="#7b8f9c"/><line x1="792.70" y1="189" x2="792.70" y2="245" stroke="#8ea4b3" stroke-width="0.6"/><rect x="792.70" y="214.8" width="5.70" height="30.20" fill="#7b8f9c"/><line x1="798.40" y1="215.8" x2="798.40" y2="245" stroke="#8ea4b3" stroke-width="0.6"/><rect x="798.40" y="192" width="5.70" height="53.00" fill="#7b8f9c"/><line x1="804.10" y1="193" x2="804.10" y2="245" stroke="#8ea4b3" stroke-width="0.6"/><rect x="804.10" y="169.9" width="5.70" height="75.10" fill="#7b8f9c"/><line x1="809.80" y1="170.9" x2="809.80" y2="245" stroke="#8ea4b3" stroke-width="0.6"/><rect x="809.80" y="201.3" width="5.70" height="43.70" fill="#7b8f9c"/><line x1="815.50" y1="202.3" x2="815.50" y2="245" stroke="#8ea4b3" stroke-width="0.6"/><rect x="815.50" y="211.4" width="5.70" height="33.60" fill="#7b8f9c"/><line x1="821.20" y1="212.4" x2="821.20" y2="245" stroke="#8ea4b3" stroke-width="0.6"/><rect x="821.20" y="222.7" width="5.70" height="22.30" fill="#7b8f9c"/><line x1="826.90" y1="223.7" x2="826.90" y2="245" stroke="#8ea4b3" stroke-width="0.6"/><rect x="826.90" y="228.4" width="5.70" height="16.60" fill="#7b8f9c"/><line x1="832.60" y1="229.4" x2="832.60" y2="245" stroke="#8ea4b3" stroke-width="0.6"/><rect x="832.60" y="238" width="5.70" height="7.00" fill="#7b8f9c"/><line x1="838.30" y1="239" x2="838.30" y2="245" stroke="#8ea4b3" stroke-width="0.6"/><rect x="838.30" y="235.2" width="5.70" height="9.80" fill="#7b8f9c"/><line x1="844.00" y1="236.2" x2="844.00" y2="245" stroke="#8ea4b3" stroke-width="0.6"/><rect x="844.00" y="237" width="5.70" height="8.00" fill="#7b8f9c"/><line x1="849.70" y1="238" x2="849.70" y2="245" stroke="#8ea4b3" stroke-width="0.6"/><rect x="849.70" y="215" width="5.70" height="30.00" fill="#7b8f9c"/><line x1="855.40" y1="216" x2="855.40" y2="245" stroke="#8ea4b3" stroke-width="0.6"/><rect x="855.40" y="216.9" width="5.70" height="28.10" fill="#7b8f9c"/><line x1="861.10" y1="217.9" x2="861.10" y2="245" stroke="#8ea4b3" stroke-width="0.6"/><rect x="861.10" y="202.9" width="5.70" height="42.10" fill="#7b8f9c"/><line x1="866.80" y1="203.9" x2="866.80" y2="245" stroke="#8ea4b3" stroke-width="0.6"/><rect x="866.80" y="197.9" width="5.70" height="47.10" fill="#7b8f9c"/><line x1="872.50" y1="198.9" x2="872.50" y2="245" stroke="#8ea4b3" stroke-width="0.6"/><rect x="872.50" y="228.1" width="5.70" height="16.90" fill="#7b8f9c"/><line x1="878.20" y1="229.1" x2="878.20" y2="245" stroke="#8ea4b3" stroke-width="0.6"/><rect x="878.20" y="230" width="5.70" height="15.00" fill="#7b8f9c"/><line x1="883.90" y1="231" x2="883.90" y2="245" stroke="#8ea4b3" stroke-width="0.6"/><rect x="883.90" y="154.3" width="5.70" height="90.70" fill="#33a8ea"/><line x1="889.60" y1="155.3" x2="889.60" y2="245" stroke="#6cc3f2" stroke-width="0.6"/><rect x="889.60" y="181.4" width="5.70" height="63.60" fill="#33a8ea"/><line x1="895.30" y1="182.4" x2="895.30" y2="245" stroke="#6cc3f2" stroke-width="0.6"/><rect x="895.30" y="164.6" width="5.70" height="80.40" fill="#33a8ea"/><line x1="901.00" y1="165.6" x2="901.00" y2="245" stroke="#6cc3f2" stroke-width="0.6"/><rect x="901.00" y="171.1" width="5.70" height="73.90" fill="#33a8ea"/><line x1="906.70" y1="172.1" x2="906.70" y2="245" stroke="#6cc3f2" stroke-width="0.6"/><rect x="906.70" y="152.1" width="5.70" height="92.90" fill="#33a8ea"/><line x1="912.40" y1="153.1" x2="912.40" y2="245" stroke="#6cc3f2" stroke-width="0.6"/><rect x="912.40" y="157.5" width="5.70" height="87.50" fill="#33a8ea"/><line x1="918.10" y1="158.5" x2="918.10" y2="245" stroke="#6cc3f2" stroke-width="0.6"/><rect x="918.10" y="190.2" width="5.70" height="54.80" fill="#33a8ea"/><line x1="923.80" y1="191.2" x2="923.80" y2="245" stroke="#6cc3f2" stroke-width="0.6"/><rect x="923.80" y="176.2" width="5.70" height="68.80" fill="#33a8ea"/><line x1="929.50" y1="177.2" x2="929.50" y2="245" stroke="#6cc3f2" stroke-width="0.6"/><rect x="929.50" y="211.9" width="5.70" height="33.10" fill="#33a8ea"/><line x1="935.20" y1="212.9" x2="935.20" y2="245" stroke="#6cc3f2" stroke-width="0.6"/><rect x="935.20" y="195" width="5.70" height="50.00" fill="#33a8ea"/><line x1="940.90" y1="196" x2="940.90" y2="245" stroke="#6cc3f2" stroke-width="0.6"/><rect x="940.90" y="188" width="5.70" height="57.00" fill="#33a8ea"/><line x1="946.60" y1="189" x2="946.60" y2="245" stroke="#6cc3f2" stroke-width="0.6"/><rect x="946.60" y="185.2" width="5.70" height="59.80" fill="#33a8ea"/><line x1="952.30" y1="186.2" x2="952.30" y2="245" stroke="#6cc3f2" stroke-width="0.6"/><rect x="952.30" y="211.9" width="5.70" height="33.10" fill="#33a8ea"/><line x1="958.00" y1="212.9" x2="958.00" y2="245" stroke="#6cc3f2" stroke-width="0.6"/><rect x="958.00" y="191.7" width="5.70" height="53.30" fill="#33a8ea"/><line x1="963.70" y1="192.7" x2="963.70" y2="245" stroke="#6cc3f2" stroke-width="0.6"/><rect x="963.70" y="150" width="5.70" height="95.00" fill="#7b8f9c"/><line x1="969.40" y1="151" x2="969.40" y2="245" stroke="#8ea4b3" stroke-width="0.6"/><rect x="969.40" y="176.2" width="5.70" height="68.80" fill="#7b8f9c"/><line x1="975.10" y1="177.2" x2="975.10" y2="245" stroke="#8ea4b3" stroke-width="0.6"/><rect x="975.10" y="161.2" width="5.70" height="83.80" fill="#7b8f9c"/><line x1="980.80" y1="162.2" x2="980.80" y2="245" stroke="#8ea4b3" stroke-width="0.6"/><rect x="980.80" y="153.8" width="5.70" height="91.20" fill="#7b8f9c"/><line x1="986.50" y1="154.8" x2="986.50" y2="245" stroke="#8ea4b3" stroke-width="0.6"/><rect x="986.50" y="222" width="5.70" height="23.00" fill="#7b8f9c"/><line x1="992.20" y1="223" x2="992.20" y2="245" stroke="#8ea4b3" stroke-width="0.6"/><rect x="992.20" y="222.9" width="5.70" height="22.10" fill="#7b8f9c"/><line x1="997.90" y1="223.9" x2="997.90" y2="245" stroke="#8ea4b3" stroke-width="0.6"/><rect x="997.90" y="234.1" width="5.70" height="10.90" fill="#7b8f9c"/><line x1="1003.60" y1="235.1" x2="1003.60" y2="245" stroke="#8ea4b3" stroke-width="0.6"/><rect x="1003.60" y="225.3" width="5.70" height="19.70" fill="#7b8f9c"/><line x1="1009.30" y1="226.3" x2="1009.30" y2="245" stroke="#8ea4b3" stroke-width="0.6"/><rect x="1009.30" y="228.1" width="5.70" height="16.90" fill="#7b8f9c"/><line x1="1015.00" y1="229.1" x2="1015.00" y2="245" stroke="#8ea4b3" stroke-width="0.6"/><rect x="1015.00" y="230.9" width="5.70" height="14.10" fill="#7b8f9c"/><line x1="1020.70" y1="231.9" x2="1020.70" y2="245" stroke="#8ea4b3" stroke-width="0.6"/><rect x="1020.70" y="237.8" width="5.70" height="7.20" fill="#7b8f9c"/><line x1="1026.40" y1="238.8" x2="1026.40" y2="245" stroke="#8ea4b3" stroke-width="0.6"/><rect x="1026.40" y="222.9" width="5.70" height="22.10" fill="#7b8f9c"/><line x1="1032.10" y1="223.9" x2="1032.10" y2="245" stroke="#8ea4b3" stroke-width="0.6"/><rect x="1032.10" y="222" width="5.70" height="23.00" fill="#7b8f9c"/><line x1="1037.80" y1="223" x2="1037.80" y2="245" stroke="#8ea4b3" stroke-width="0.6"/><rect x="1037.80" y="232.8" width="5.70" height="12.20" fill="#7b8f9c"/><line x1="1043.50" y1="233.8" x2="1043.50" y2="245" stroke="#8ea4b3" stroke-width="0.6"/><line x1="882.5" y1="150" x2="882.5" y2="245" stroke="#777" stroke-width="1"/><line x1="963.5" y1="150" x2="963.5" y2="245" stroke="#777" stroke-width="1"/><clipPath id="cx1"><rect x="634" y="245" width="410.5" height="30"/></clipPath><g clip-path="url(#cx1)"><line x1="644.7" y1="245" x2="644.7" y2="251" stroke="#cfcfcf" stroke-width="1"/><text x="644.7" y="260.8" class="ax" text-anchor="middle">7 AM</text><line x1="678.9" y1="245" x2="678.9" y2="251" stroke="#cfcfcf" stroke-width="1"/><text x="678.9" y="260.8" class="ax" text-anchor="middle">8 AM</text><line x1="713.1" y1="245" x2="713.1" y2="251" stroke="#cfcfcf" stroke-width="1"/><text x="713.1" y="260.8" class="ax" text-anchor="middle">9 AM</text><line x1="747.3" y1="245" x2="747.3" y2="251" stroke="#cfcfcf" stroke-width="1"/><text x="747.3" y="260.8" class="ax" text-anchor="middle">10 AM</text><line x1="781.5" y1="245" x2="781.5" y2="251" stroke="#cfcfcf" stroke-width="1"/><text x="781.5" y="260.8" class="ax" text-anchor="middle">11 AM</text><line x1="815.7" y1="245" x2="815.7" y2="251" stroke="#cfcfcf" stroke-width="1"/><text x="815.7" y="260.8" class="ax" text-anchor="middle">12 PM</text><line x1="849.9" y1="245" x2="849.9" y2="251" stroke="#cfcfcf" stroke-width="1"/><text x="849.9" y="260.8" class="ax" text-anchor="middle">1 PM</text><line x1="884.1" y1="245" x2="884.1" y2="251" stroke="#cfcfcf" stroke-width="1"/><text x="884.1" y="260.8" class="ax" text-anchor="middle">2 PM</text><line x1="918.3" y1="245" x2="918.3" y2="251" stroke="#cfcfcf" stroke-width="1"/><text x="918.3" y="260.8" class="ax" text-anchor="middle">3 PM</text><line x1="952.5" y1="245" x2="952.5" y2="251" stroke="#cfcfcf" stroke-width="1"/><text x="952.5" y="260.8" class="ax" text-anchor="middle">4 PM</text><line x1="986.7" y1="245" x2="986.7" y2="251" stroke="#cfcfcf" stroke-width="1"/><text x="986.7" y="260.8" class="ax" text-anchor="middle">5 PM</text><line x1="1020.9" y1="245" x2="1020.9" y2="251" stroke="#cfcfcf" stroke-width="1"/><text x="1020.9" y="260.8" class="ax" text-anchor="middle">6 PM</text></g><rect x="882.5" y="290.5" width="81.0" height="238" fill="#e6e6e6"/><line x1="599" y1="290.5" x2="629" y2="290.5" stroke="#c8c8c8" stroke-width="1.2"/><line x1="1050" y1="290.5" x2="1080" y2="290.5" stroke="#c8c8c8" stroke-width="1.2"/><line x1="599" y1="350.5" x2="629" y2="350.5" stroke="#c8c8c8" stroke-width="1.2"/><line x1="1050" y1="350.5" x2="1080" y2="350.5" stroke="#c8c8c8" stroke-width="1.2"/><line x1="599" y1="409.5" x2="629" y2="409.5" stroke="#c8c8c8" stroke-width="1.2"/><line x1="1050" y1="409.5" x2="1080" y2="409.5" stroke="#c8c8c8" stroke-width="1.2"/><line x1="599" y1="469.5" x2="629" y2="469.5" stroke="#c8c8c8" stroke-width="1.2"/><line x1="1050" y1="469.5" x2="1080" y2="469.5" stroke="#c8c8c8" stroke-width="1.2"/><line x1="599" y1="528.5" x2="629" y2="528.5" stroke="#c8c8c8" stroke-width="1.2"/><line x1="1050" y1="528.5" x2="1080" y2="528.5" stroke="#c8c8c8" stroke-width="1.2"/><line x1="634" y1="350.5" x2="1044.5" y2="350.5" stroke="#e9e9e9" stroke-width="1"/><line x1="634" y1="409.5" x2="1044.5" y2="409.5" stroke="#e9e9e9" stroke-width="1"/><line x1="634" y1="469.5" x2="1044.5" y2="469.5" stroke="#e9e9e9" stroke-width="1"/><line x1="634" y1="290.5" x2="1044.5" y2="290.5" stroke="#cccccc" stroke-width="1.1"/><line x1="633.5" y1="290.5" x2="633.5" y2="547.6" stroke="#cccccc" stroke-width="1.1"/><line x1="1044.5" y1="290.5" x2="1044.5" y2="547.6" stroke="#cccccc" stroke-width="1.1"/><text x="599" y="304.5" class="ax">704</text><text x="1050" y="304.5" class="ax">704</text><text x="599" y="364" class="ax">528</text><text x="1050" y="364" class="ax">528</text><text x="599" y="423.5" class="ax">352</text><text x="1050" y="423.5" class="ax">352</text><text x="599" y="483" class="ax">176</text><text x="1050" y="483" class="ax">176</text><text x="599" y="543.5" class="ax">0.00</text><text x="1050" y="543.5" class="ax">0.00</text><line x1="634" y1="528.5" x2="1044.5" y2="528.5" stroke="#cfcfcf" stroke-width="2"/><rect x="644.50" y="469.12" width="5.70" height="7.87" fill="#7d909e"/><rect x="644.85" y="469.47" width="5.00" height="7.17" fill="none" stroke="rgba(50,40,60,0.34)" stroke-width="0.8"/><rect x="644.50" y="476.99" width="5.70" height="11.52" fill="#9b7591"/><rect x="644.85" y="477.34" width="5.00" height="10.82" fill="none" stroke="rgba(50,40,60,0.34)" stroke-width="0.8"/><rect x="644.50" y="488.51" width="5.70" height="24.59" fill="#8fa9a5"/><rect x="644.85" y="488.86" width="5.00" height="23.89" fill="none" stroke="rgba(50,40,60,0.34)" stroke-width="0.8"/><rect x="644.50" y="513.09" width="5.70" height="7.02" fill="#887a92"/><rect x="644.85" y="513.44" width="5.00" height="6.32" fill="none" stroke="rgba(50,40,60,0.34)" stroke-width="0.8"/><rect x="644.50" y="520.12" width="5.70" height="3.51" fill="#bfbb9f"/><rect x="644.85" y="520.47" width="5.00" height="2.81" fill="none" stroke="rgba(50,40,60,0.34)" stroke-width="0.8"/><rect x="644.50" y="523.63" width="5.70" height="4.87" fill="#887a92"/><rect x="644.85" y="523.98" width="5.00" height="4.17" fill="none" stroke="rgba(50,40,60,0.34)" stroke-width="0.8"/><rect x="644.80" y="469.42" width="5.10" height="59.08" fill="none" stroke="rgba(60,60,80,0.18)" stroke-width="0.6"/><rect x="650.20" y="502.14" width="5.70" height="12.36" fill="#7d909e"/><rect x="650.55" y="502.49" width="5.00" height="11.66" fill="none" stroke="rgba(50,40,60,0.34)" stroke-width="0.8"/><rect x="650.20" y="514.50" width="5.70" height="10.54" fill="#9b7591"/><rect x="650.55" y="514.85" width="5.00" height="9.84" fill="none" stroke="rgba(50,40,60,0.34)" stroke-width="0.8"/><rect x="650.20" y="525.04" width="5.70" height="3.46" fill="#8fa9a5"/><rect x="650.55" y="525.39" width="5.00" height="2.76" fill="none" stroke="rgba(50,40,60,0.34)" stroke-width="0.8"/><rect x="650.50" y="502.44" width="5.10" height="26.06" fill="none" stroke="rgba(60,60,80,0.18)" stroke-width="0.6"/><rect x="655.90" y="473.05" width="5.70" height="22.48" fill="#7d909e"/><rect x="656.25" y="473.40" width="5.00" height="21.78" fill="none" stroke="rgba(50,40,60,0.34)" stroke-width="0.8"/><rect x="655.90" y="495.53" width="5.70" height="11.94" fill="#9b7591"/><rect x="656.25" y="495.88" width="5.00" height="11.24" fill="none" stroke="rgba(50,40,60,0.34)" stroke-width="0.8"/><rect x="655.90" y="507.47" width="5.70" height="21.03" fill="#8fa9a5"/><rect x="656.25" y="507.82" width="5.00" height="20.33" fill="none" stroke="rgba(50,40,60,0.34)" stroke-width="0.8"/><rect x="656.20" y="473.35" width="5.10" height="55.15" fill="none" stroke="rgba(60,60,80,0.18)" stroke-width="0.6"/><rect x="661.60" y="485.00" width="5.70" height="16.16" fill="#7d909e"/><rect x="661.95" y="485.35" width="5.00" height="15.46" fill="none" stroke="rgba(50,40,60,0.34)" stroke-width="0.8"/><rect x="661.60" y="501.15" width="5.70" height="13.35" fill="#9b7591"/><rect x="661.95" y="501.50" width="5.00" height="12.65" fill="none" stroke="rgba(50,40,60,0.34)" stroke-width="0.8"/><rect x="661.60" y="514.50" width="5.70" height="14.00" fill="#8fa9a5"/><rect x="661.95" y="514.85" width="5.00" height="13.30" fill="none" stroke="rgba(50,40,60,0.34)" stroke-width="0.8"/><rect x="661.90" y="485.30" width="5.10" height="43.20" fill="none" stroke="rgba(60,60,80,0.18)" stroke-width="0.6"/><rect x="667.30" y="502.14" width="5.70" height="15.88" fill="#7d909e"/><rect x="667.65" y="502.49" width="5.00" height="15.18" fill="none" stroke="rgba(50,40,60,0.34)" stroke-width="0.8"/><rect x="667.30" y="518.01" width="5.70" height="6.32" fill="#9b7591"/><rect x="667.65" y="518.36" width="5.00" height="5.62" fill="none" stroke="rgba(50,40,60,0.34)" stroke-width="0.8"/><rect x="667.30" y="524.33" width="5.70" height="4.17" fill="#8fa9a5"/><rect x="667.65" y="524.68" width="5.00" height="3.47" fill="none" stroke="rgba(50,40,60,0.34)" stroke-width="0.8"/><rect x="667.60" y="502.44" width="5.10" height="26.06" fill="none" stroke="rgba(60,60,80,0.18)" stroke-width="0.6"/><rect x="673.00" y="491.04" width="5.70" height="23.46" fill="#7d909e"/><rect x="673.35" y="491.39" width="5.00" height="22.76" fill="none" stroke="rgba(50,40,60,0.34)" stroke-width="0.8"/><rect x="673.00" y="514.50" width="5.70" height="9.83" fill="#9b7591"/><rect x="673.35" y="514.85" width="5.00" height="9.13" fill="none" stroke="rgba(50,40,60,0.34)" stroke-width="0.8"/><rect x="673.00" y="524.33" width="5.70" height="4.17" fill="#8fa9a5"/><rect x="673.35" y="524.68" width="5.00" height="3.47" fill="none" stroke="rgba(50,40,60,0.34)" stroke-width="0.8"/><rect x="673.30" y="491.34" width="5.10" height="37.16" fill="none" stroke="rgba(60,60,80,0.18)" stroke-width="0.6"/><rect x="678.70" y="487.38" width="5.70" height="17.28" fill="#7d909e"/><rect x="679.05" y="487.73" width="5.00" height="16.58" fill="none" stroke="rgba(50,40,60,0.34)" stroke-width="0.8"/><rect x="678.70" y="504.66" width="5.70" height="10.54" fill="#9b7591"/><rect x="679.05" y="505.01" width="5.00" height="9.84" fill="none" stroke="rgba(50,40,60,0.34)" stroke-width="0.8"/><rect x="678.70" y="515.20" width="5.70" height="13.30" fill="#8fa9a5"/><rect x="679.05" y="515.55" width="5.00" height="12.60" fill="none" stroke="rgba(50,40,60,0.34)" stroke-width="0.8"/><rect x="679.00" y="487.68" width="5.10" height="40.82" fill="none" stroke="rgba(60,60,80,0.18)" stroke-width="0.6"/><rect x="684.40" y="476.29" width="5.70" height="11.52" fill="#7d909e"/><rect x="684.75" y="476.64" width="5.00" height="10.82" fill="none" stroke="rgba(50,40,60,0.34)" stroke-width="0.8"/><rect x="684.40" y="487.81" width="5.70" height="4.50" fill="#9b7591"/><rect x="684.75" y="488.16" width="5.00" height="3.80" fill="none" stroke="rgba(50,40,60,0.34)" stroke-width="0.8"/><rect x="684.40" y="492.30" width="5.70" height="21.49" fill="#8fa9a5"/><rect x="684.75" y="492.65" width="5.00" height="20.79" fill="none" stroke="rgba(50,40,60,0.34)" stroke-width="0.8"/><rect x="684.40" y="513.80" width="5.70" height="2.81" fill="#887a92"/><rect x="684.75" y="514.15" width="5.00" height="2.11" fill="none" stroke="rgba(50,40,60,0.34)" stroke-width="0.8"/><rect x="684.40" y="516.61" width="5.70" height="8.43" fill="#bfbb9f"/><rect x="684.75" y="516.96" width="5.00" height="7.73" fill="none" stroke="rgba(50,40,60,0.34)" stroke-width="0.8"/><rect x="684.40" y="525.04" width="5.70" height="3.46" fill="#8fa9a5"/><rect x="684.75" y="525.39" width="5.00" height="2.76" fill="none" stroke="rgba(50,40,60,0.34)" stroke-width="0.8"/><rect x="684.70" y="476.59" width="5.10" height="51.91" fill="none" stroke="rgba(60,60,80,0.18)" stroke-width="0.6"/><rect x="690.10" y="483.17" width="5.70" height="24.30" fill="#7d909e"/><rect x="690.45" y="483.52" width="5.00" height="23.60" fill="none" stroke="rgba(50,40,60,0.34)" stroke-width="0.8"/><rect x="690.10" y="507.47" width="5.70" height="17.56" fill="#9b7591"/><rect x="690.45" y="507.82" width="5.00" height="16.86" fill="none" stroke="rgba(50,40,60,0.34)" stroke-width="0.8"/><rect x="690.10" y="525.04" width="5.70" height="3.46" fill="#8fa9a5"/><rect x="690.45" y="525.39" width="5.00" height="2.76" fill="none" stroke="rgba(50,40,60,0.34)" stroke-width="0.8"/><rect x="690.40" y="483.47" width="5.10" height="45.03" fill="none" stroke="rgba(60,60,80,0.18)" stroke-width="0.6"/><rect x="695.80" y="484.01" width="5.70" height="14.33" fill="#7d909e"/><rect x="696.15" y="484.36" width="5.00" height="13.63" fill="none" stroke="rgba(50,40,60,0.34)" stroke-width="0.8"/><rect x="695.80" y="498.34" width="5.70" height="16.86" fill="#9b7591"/><rect x="696.15" y="498.69" width="5.00" height="16.16" fill="none" stroke="rgba(50,40,60,0.34)" stroke-width="0.8"/><rect x="695.80" y="515.20" width="5.70" height="13.30" fill="#8fa9a5"/><rect x="696.15" y="515.55" width="5.00" height="12.60" fill="none" stroke="rgba(50,40,60,0.34)" stroke-width="0.8"/><rect x="696.10" y="484.31" width="5.10" height="44.19" fill="none" stroke="rgba(60,60,80,0.18)" stroke-width="0.6"/><rect x="701.50" y="482.19" width="5.70" height="34.42" fill="#7d909e"/><rect x="701.85" y="482.54" width="5.00" height="33.72" fill="none" stroke="rgba(50,40,60,0.34)" stroke-width="0.8"/><rect x="701.50" y="516.61" width="5.70" height="8.43" fill="#9b7591"/><rect x="701.85" y="516.96" width="5.00" height="7.73" fill="none" stroke="rgba(50,40,60,0.34)" stroke-width="0.8"/><rect x="701.50" y="525.04" width="5.70" height="3.46" fill="#8fa9a5"/><rect x="701.85" y="525.39" width="5.00" height="2.76" fill="none" stroke="rgba(50,40,60,0.34)" stroke-width="0.8"/><rect x="701.80" y="482.49" width="5.10" height="46.01" fill="none" stroke="rgba(60,60,80,0.18)" stroke-width="0.6"/><rect x="707.20" y="489.21" width="5.70" height="14.33" fill="#7d909e"/><rect x="707.55" y="489.56" width="5.00" height="13.63" fill="none" stroke="rgba(50,40,60,0.34)" stroke-width="0.8"/><rect x="707.20" y="503.54" width="5.70" height="10.26" fill="#9b7591"/><rect x="707.55" y="503.89" width="5.00" height="9.56" fill="none" stroke="rgba(50,40,60,0.34)" stroke-width="0.8"/><rect x="707.20" y="513.80" width="5.70" height="11.24" fill="#8fa9a5"/><rect x="707.55" y="514.15" width="5.00" height="10.54" fill="none" stroke="rgba(50,40,60,0.34)" stroke-width="0.8"/><rect x="707.20" y="525.04" width="5.70" height="3.46" fill="#887a92"/><rect x="707.55" y="525.39" width="5.00" height="2.76" fill="none" stroke="rgba(50,40,60,0.34)" stroke-width="0.8"/><rect x="707.50" y="489.51" width="5.10" height="38.99" fill="none" stroke="rgba(60,60,80,0.18)" stroke-width="0.6"/><rect x="712.90" y="459.01" width="5.70" height="44.96" fill="#7d909e"/><rect x="713.25" y="459.36" width="5.00" height="44.26" fill="none" stroke="rgba(50,40,60,0.34)" stroke-width="0.8"/><rect x="712.90" y="503.96" width="5.70" height="18.97" fill="#9b7591"/><rect x="713.25" y="504.31" width="5.00" height="18.27" fill="none" stroke="rgba(50,40,60,0.34)" stroke-width="0.8"/><rect x="712.90" y="522.93" width="5.70" height="5.57" fill="#887a92"/><rect x="713.25" y="523.28" width="5.00" height="4.87" fill="none" stroke="rgba(50,40,60,0.34)" stroke-width="0.8"/><rect x="713.20" y="459.31" width="5.10" height="69.19" fill="none" stroke="rgba(60,60,80,0.18)" stroke-width="0.6"/><rect x="718.60" y="505.09" width="5.70" height="14.33" fill="#7d909e"/><rect x="718.95" y="505.44" width="5.00" height="13.63" fill="none" stroke="rgba(50,40,60,0.34)" stroke-width="0.8"/><rect x="718.60" y="519.42" width="5.70" height="9.08" fill="#9b7591"/><rect x="718.95" y="519.77" width="5.00" height="8.38" fill="none" stroke="rgba(50,40,60,0.34)" stroke-width="0.8"/><rect x="718.90" y="505.39" width="5.10" height="23.11" fill="none" stroke="rgba(60,60,80,0.18)" stroke-width="0.6"/><rect x="724.30" y="499.04" width="5.70" height="8.43" fill="#7d909e"/><rect x="724.65" y="499.39" width="5.00" height="7.73" fill="none" stroke="rgba(50,40,60,0.34)" stroke-width="0.8"/><rect x="724.30" y="507.47" width="5.70" height="7.02" fill="#9b7591"/><rect x="724.65" y="507.82" width="5.00" height="6.32" fill="none" stroke="rgba(50,40,60,0.34)" stroke-width="0.8"/><rect x="724.30" y="514.50" width="5.70" height="7.73" fill="#8fa9a5"/><rect x="724.65" y="514.85" width="5.00" height="7.03" fill="none" stroke="rgba(50,40,60,0.34)" stroke-width="0.8"/><rect x="724.30" y="522.23" width="5.70" height="6.27" fill="#887a92"/><rect x="724.65" y="522.58" width="5.00" height="5.57" fill="none" stroke="rgba(50,40,60,0.34)" stroke-width="0.8"/><rect x="724.60" y="499.34" width="5.10" height="29.16" fill="none" stroke="rgba(60,60,80,0.18)" stroke-width="0.6"/><rect x="730.00" y="498.06" width="5.70" height="14.33" fill="#7d909e"/><rect x="730.35" y="498.41" width="5.00" height="13.63" fill="none" stroke="rgba(50,40,60,0.34)" stroke-width="0.8"/><rect x="730.00" y="512.39" width="5.70" height="6.32" fill="#9b7591"/><rect x="730.35" y="512.74" width="5.00" height="5.62" fill="none" stroke="rgba(50,40,60,0.34)" stroke-width="0.8"/><rect x="730.00" y="518.71" width="5.70" height="5.62" fill="#8fa9a5"/><rect x="730.35" y="519.06" width="5.00" height="4.92" fill="none" stroke="rgba(50,40,60,0.34)" stroke-width="0.8"/><rect x="730.00" y="524.33" width="5.70" height="4.17" fill="#bfbb9f"/><rect x="730.35" y="524.68" width="5.00" height="3.47" fill="none" stroke="rgba(50,40,60,0.34)" stroke-width="0.8"/><rect x="730.30" y="498.36" width="5.10" height="30.14" fill="none" stroke="rgba(60,60,80,0.18)" stroke-width="0.6"/><rect x="735.70" y="515.90" width="5.70" height="7.73" fill="#7d909e"/><rect x="736.05" y="516.25" width="5.00" height="7.03" fill="none" stroke="rgba(50,40,60,0.34)" stroke-width="0.8"/><rect x="735.70" y="523.63" width="5.70" height="4.87" fill="#8fa9a5"/><rect x="736.05" y="523.98" width="5.00" height="4.17" fill="none" stroke="rgba(50,40,60,0.34)" stroke-width="0.8"/><rect x="736.00" y="516.20" width="5.10" height="12.30" fill="none" stroke="rgba(60,60,80,0.18)" stroke-width="0.6"/><rect x="741.40" y="491.24" width="5.70" height="9.62" fill="#7d909e"/><rect x="741.75" y="491.59" width="5.00" height="8.92" fill="none" stroke="rgba(50,40,60,0.34)" stroke-width="0.8"/><rect x="741.40" y="500.86" width="5.70" height="8.32" fill="#9b7591"/><rect x="741.75" y="501.21" width="5.00" height="7.62" fill="none" stroke="rgba(50,40,60,0.34)" stroke-width="0.8"/><rect x="741.40" y="509.19" width="5.70" height="7.28" fill="#8fa9a5"/><rect x="741.75" y="509.54" width="5.00" height="6.58" fill="none" stroke="rgba(50,40,60,0.34)" stroke-width="0.8"/><rect x="741.40" y="516.47" width="5.70" height="12.03" fill="#887a92"/><rect x="741.75" y="516.82" width="5.00" height="11.33" fill="none" stroke="rgba(50,40,60,0.34)" stroke-width="0.8"/><rect x="741.70" y="491.54" width="5.10" height="36.96" fill="none" stroke="rgba(60,60,80,0.18)" stroke-width="0.6"/><rect x="747.10" y="494.36" width="5.70" height="14.30" fill="#7d909e"/><rect x="747.45" y="494.71" width="5.00" height="13.60" fill="none" stroke="rgba(50,40,60,0.34)" stroke-width="0.8"/><rect x="747.10" y="508.67" width="5.70" height="6.50" fill="#9b7591"/><rect x="747.45" y="509.02" width="5.00" height="5.80" fill="none" stroke="rgba(50,40,60,0.34)" stroke-width="0.8"/><rect x="747.10" y="515.17" width="5.70" height="5.20" fill="#8fa9a5"/><rect x="747.45" y="515.52" width="5.00" height="4.50" fill="none" stroke="rgba(50,40,60,0.34)" stroke-width="0.8"/><rect x="747.10" y="520.37" width="5.70" height="8.13" fill="#bfbb9f"/><rect x="747.45" y="520.72" width="5.00" height="7.43" fill="none" stroke="rgba(50,40,60,0.34)" stroke-width="0.8"/><rect x="747.40" y="494.66" width="5.10" height="33.84" fill="none" stroke="rgba(60,60,80,0.18)" stroke-width="0.6"/><rect x="752.80" y="496.96" width="5.70" height="10.40" fill="#7d909e"/><rect x="753.15" y="497.31" width="5.00" height="9.70" fill="none" stroke="rgba(50,40,60,0.34)" stroke-width="0.8"/><rect x="752.80" y="507.37" width="5.70" height="5.98" fill="#9b7591"/><rect x="753.15" y="507.72" width="5.00" height="5.28" fill="none" stroke="rgba(50,40,60,0.34)" stroke-width="0.8"/><rect x="752.80" y="513.35" width="5.70" height="5.72" fill="#8fa9a5"/><rect x="753.15" y="513.70" width="5.00" height="5.02" fill="none" stroke="rgba(50,40,60,0.34)" stroke-width="0.8"/><rect x="752.80" y="519.07" width="5.70" height="9.43" fill="#887a92"/><rect x="753.15" y="519.42" width="5.00" height="8.73" fill="none" stroke="rgba(50,40,60,0.34)" stroke-width="0.8"/><rect x="753.10" y="497.26" width="5.10" height="31.24" fill="none" stroke="rgba(60,60,80,0.18)" stroke-width="0.6"/><rect x="758.50" y="502.95" width="5.70" height="14.82" fill="#7d909e"/><rect x="758.85" y="503.30" width="5.00" height="14.12" fill="none" stroke="rgba(50,40,60,0.34)" stroke-width="0.8"/><rect x="758.50" y="517.77" width="5.70" height="10.73" fill="#9b7591"/><rect x="758.85" y="518.12" width="5.00" height="10.03" fill="none" stroke="rgba(50,40,60,0.34)" stroke-width="0.8"/><rect x="758.80" y="503.25" width="5.10" height="25.25" fill="none" stroke="rgba(60,60,80,0.18)" stroke-width="0.6"/><rect x="764.20" y="464.97" width="5.70" height="20.29" fill="#7d909e"/><rect x="764.55" y="465.32" width="5.00" height="19.59" fill="none" stroke="rgba(50,40,60,0.34)" stroke-width="0.8"/><rect x="764.20" y="485.26" width="5.70" height="12.48" fill="#9b7591"/><rect x="764.55" y="485.61" width="5.00" height="11.78" fill="none" stroke="rgba(50,40,60,0.34)" stroke-width="0.8"/><rect x="764.20" y="497.74" width="5.70" height="11.44" fill="#8fa9a5"/><rect x="764.55" y="498.09" width="5.00" height="10.74" fill="none" stroke="rgba(50,40,60,0.34)" stroke-width="0.8"/><rect x="764.20" y="509.19" width="5.70" height="7.28" fill="#887a92"/><rect x="764.55" y="509.54" width="5.00" height="6.58" fill="none" stroke="rgba(50,40,60,0.34)" stroke-width="0.8"/><rect x="764.20" y="516.47" width="5.70" height="12.03" fill="#bfbb9f"/><rect x="764.55" y="516.82" width="5.00" height="11.33" fill="none" stroke="rgba(50,40,60,0.34)" stroke-width="0.8"/><rect x="764.50" y="465.27" width="5.10" height="63.23" fill="none" stroke="rgba(60,60,80,0.18)" stroke-width="0.6"/><rect x="769.90" y="441.83" width="5.70" height="22.11" fill="#7d909e"/><rect x="770.25" y="442.18" width="5.00" height="21.41" fill="none" stroke="rgba(50,40,60,0.34)" stroke-width="0.8"/><rect x="769.90" y="463.93" width="5.70" height="17.43" fill="#9b7591"/><rect x="770.25" y="464.28" width="5.00" height="16.73" fill="none" stroke="rgba(50,40,60,0.34)" stroke-width="0.8"/><rect x="769.90" y="481.36" width="5.70" height="22.11" fill="#8fa9a5"/><rect x="770.25" y="481.71" width="5.00" height="21.41" fill="none" stroke="rgba(50,40,60,0.34)" stroke-width="0.8"/><rect x="769.90" y="503.47" width="5.70" height="9.10" fill="#887a92"/><rect x="770.25" y="503.82" width="5.00" height="8.40" fill="none" stroke="rgba(50,40,60,0.34)" stroke-width="0.8"/><rect x="769.90" y="512.57" width="5.70" height="15.93" fill="#bfbb9f"/><rect x="770.25" y="512.92" width="5.00" height="15.23" fill="none" stroke="rgba(50,40,60,0.34)" stroke-width="0.8"/><rect x="770.20" y="442.13" width="5.10" height="86.37" fill="none" stroke="rgba(60,60,80,0.18)" stroke-width="0.6"/><rect x="775.60" y="435.85" width="5.70" height="28.61" fill="#7d909e"/><rect x="775.95" y="436.20" width="5.00" height="27.91" fill="none" stroke="rgba(50,40,60,0.34)" stroke-width="0.8"/><rect x="775.60" y="464.45" width="5.70" height="23.41" fill="#9b7591"/><rect x="775.95" y="464.80" width="5.00" height="22.71" fill="none" stroke="rgba(50,40,60,0.34)" stroke-width="0.8"/><rect x="775.60" y="487.86" width="5.70" height="13.00" fill="#8fa9a5"/><rect x="775.95" y="488.21" width="5.00" height="12.30" fill="none" stroke="rgba(50,40,60,0.34)" stroke-width="0.8"/><rect x="775.60" y="500.86" width="5.70" height="16.91" fill="#887a92"/><rect x="775.95" y="501.21" width="5.00" height="16.21" fill="none" stroke="rgba(50,40,60,0.34)" stroke-width="0.8"/><rect x="775.60" y="517.77" width="5.70" height="10.73" fill="#bfbb9f"/><rect x="775.95" y="518.12" width="5.00" height="10.03" fill="none" stroke="rgba(50,40,60,0.34)" stroke-width="0.8"/><rect x="775.90" y="436.15" width="5.10" height="92.35" fill="none" stroke="rgba(60,60,80,0.18)" stroke-width="0.6"/><rect x="781.30" y="353.14" width="5.70" height="31.47" fill="#7d909e"/><rect x="781.65" y="353.49" width="5.00" height="30.77" fill="none" stroke="rgba(50,40,60,0.34)" stroke-width="0.8"/><rect x="781.30" y="384.61" width="5.70" height="27.83" fill="#9b7591"/><rect x="781.65" y="384.96" width="5.00" height="27.13" fill="none" stroke="rgba(50,40,60,0.34)" stroke-width="0.8"/><rect x="781.30" y="412.44" width="5.70" height="33.29" fill="#8fa9a5"/><rect x="781.65" y="412.79" width="5.00" height="32.59" fill="none" stroke="rgba(50,40,60,0.34)" stroke-width="0.8"/><rect x="781.30" y="445.73" width="5.70" height="47.33" fill="#887a92"/><rect x="781.65" y="446.08" width="5.00" height="46.63" fill="none" stroke="rgba(50,40,60,0.34)" stroke-width="0.8"/><rect x="781.30" y="493.06" width="5.70" height="35.44" fill="#bfbb9f"/><rect x="781.65" y="493.41" width="5.00" height="34.74" fill="none" stroke="rgba(50,40,60,0.34)" stroke-width="0.8"/><rect x="781.60" y="353.44" width="5.10" height="175.06" fill="none" stroke="rgba(60,60,80,0.18)" stroke-width="0.6"/><rect x="787.00" y="383.83" width="5.70" height="35.89" fill="#7d909e"/><rect x="787.35" y="384.18" width="5.00" height="35.19" fill="none" stroke="rgba(50,40,60,0.34)" stroke-width="0.8"/><rect x="787.00" y="419.72" width="5.70" height="41.61" fill="#9b7591"/><rect x="787.35" y="420.07" width="5.00" height="40.91" fill="none" stroke="rgba(50,40,60,0.34)" stroke-width="0.8"/><rect x="787.00" y="461.33" width="5.70" height="13.00" fill="#8fa9a5"/><rect x="787.35" y="461.68" width="5.00" height="12.30" fill="none" stroke="rgba(50,40,60,0.34)" stroke-width="0.8"/><rect x="787.00" y="474.34" width="5.70" height="36.93" fill="#887a92"/><rect x="787.35" y="474.69" width="5.00" height="36.23" fill="none" stroke="rgba(50,40,60,0.34)" stroke-width="0.8"/><rect x="787.00" y="511.27" width="5.70" height="17.23" fill="#bfbb9f"/><rect x="787.35" y="511.62" width="5.00" height="16.53" fill="none" stroke="rgba(50,40,60,0.34)" stroke-width="0.8"/><rect x="787.30" y="384.13" width="5.10" height="144.37" fill="none" stroke="rgba(60,60,80,0.18)" stroke-width="0.6"/><rect x="792.70" y="451.45" width="5.70" height="35.89" fill="#7d909e"/><rect x="793.05" y="451.80" width="5.00" height="35.19" fill="none" stroke="rgba(50,40,60,0.34)" stroke-width="0.8"/><rect x="792.70" y="487.34" width="5.70" height="7.80" fill="#9b7591"/><rect x="793.05" y="487.69" width="5.00" height="7.10" fill="none" stroke="rgba(50,40,60,0.34)" stroke-width="0.8"/><rect x="792.70" y="495.14" width="5.70" height="13.00" fill="#8fa9a5"/><rect x="793.05" y="495.49" width="5.00" height="12.30" fill="none" stroke="rgba(50,40,60,0.34)" stroke-width="0.8"/><rect x="792.70" y="508.15" width="5.70" height="10.40" fill="#887a92"/><rect x="793.05" y="508.50" width="5.00" height="9.70" fill="none" stroke="rgba(50,40,60,0.34)" stroke-width="0.8"/><rect x="792.70" y="518.55" width="5.70" height="9.95" fill="#bfbb9f"/><rect x="793.05" y="518.90" width="5.00" height="9.25" fill="none" stroke="rgba(50,40,60,0.34)" stroke-width="0.8"/><rect x="793.00" y="451.75" width="5.10" height="76.75" fill="none" stroke="rgba(60,60,80,0.18)" stroke-width="0.6"/><rect x="798.40" y="393.71" width="5.70" height="41.61" fill="#7d909e"/><rect x="798.75" y="394.06" width="5.00" height="40.91" fill="none" stroke="rgba(50,40,60,0.34)" stroke-width="0.8"/><rect x="798.40" y="435.33" width="5.70" height="18.21" fill="#9b7591"/><rect x="798.75" y="435.68" width="5.00" height="17.51" fill="none" stroke="rgba(50,40,60,0.34)" stroke-width="0.8"/><rect x="798.40" y="453.53" width="5.70" height="27.83" fill="#8fa9a5"/><rect x="798.75" y="453.88" width="5.00" height="27.13" fill="none" stroke="rgba(50,40,60,0.34)" stroke-width="0.8"/><rect x="798.40" y="481.36" width="5.70" height="23.41" fill="#887a92"/><rect x="798.75" y="481.71" width="5.00" height="22.71" fill="none" stroke="rgba(50,40,60,0.34)" stroke-width="0.8"/><rect x="798.40" y="504.77" width="5.70" height="23.73" fill="#bfbb9f"/><rect x="798.75" y="505.12" width="5.00" height="23.03" fill="none" stroke="rgba(50,40,60,0.34)" stroke-width="0.8"/><rect x="798.70" y="394.01" width="5.10" height="134.49" fill="none" stroke="rgba(60,60,80,0.18)" stroke-width="0.6"/><rect x="804.10" y="339.10" width="5.70" height="47.85" fill="#7d909e"/><rect x="804.45" y="339.45" width="5.00" height="47.15" fill="none" stroke="rgba(50,40,60,0.34)" stroke-width="0.8"/><rect x="804.10" y="386.95" width="5.70" height="16.38" fill="#9b7591"/><rect x="804.45" y="387.30" width="5.00" height="15.68" fill="none" stroke="rgba(50,40,60,0.34)" stroke-width="0.8"/><rect x="804.10" y="403.34" width="5.70" height="38.49" fill="#8fa9a5"/><rect x="804.45" y="403.69" width="5.00" height="37.79" fill="none" stroke="rgba(50,40,60,0.34)" stroke-width="0.8"/><rect x="804.10" y="441.83" width="5.70" height="52.54" fill="#887a92"/><rect x="804.45" y="442.18" width="5.00" height="51.84" fill="none" stroke="rgba(50,40,60,0.34)" stroke-width="0.8"/><rect x="804.10" y="494.36" width="5.70" height="34.14" fill="#bfbb9f"/><rect x="804.45" y="494.71" width="5.00" height="33.44" fill="none" stroke="rgba(50,40,60,0.34)" stroke-width="0.8"/><rect x="804.40" y="339.40" width="5.10" height="189.10" fill="none" stroke="rgba(60,60,80,0.18)" stroke-width="0.6"/><rect x="809.80" y="418.42" width="5.70" height="44.21" fill="#7d909e"/><rect x="810.15" y="418.77" width="5.00" height="43.51" fill="none" stroke="rgba(50,40,60,0.34)" stroke-width="0.8"/><rect x="809.80" y="462.63" width="5.70" height="7.54" fill="#9b7591"/><rect x="810.15" y="462.98" width="5.00" height="6.84" fill="none" stroke="rgba(50,40,60,0.34)" stroke-width="0.8"/><rect x="809.80" y="470.18" width="5.70" height="18.21" fill="#8fa9a5"/><rect x="810.15" y="470.53" width="5.00" height="17.51" fill="none" stroke="rgba(50,40,60,0.34)" stroke-width="0.8"/><rect x="809.80" y="488.38" width="5.70" height="21.59" fill="#887a92"/><rect x="810.15" y="488.73" width="5.00" height="20.89" fill="none" stroke="rgba(50,40,60,0.34)" stroke-width="0.8"/><rect x="809.80" y="509.97" width="5.70" height="18.53" fill="#bfbb9f"/><rect x="810.15" y="510.32" width="5.00" height="17.83" fill="none" stroke="rgba(50,40,60,0.34)" stroke-width="0.8"/><rect x="810.10" y="418.72" width="5.10" height="109.78" fill="none" stroke="rgba(60,60,80,0.18)" stroke-width="0.6"/><rect x="815.50" y="443.13" width="5.70" height="27.05" fill="#7d909e"/><rect x="815.85" y="443.48" width="5.00" height="26.35" fill="none" stroke="rgba(50,40,60,0.34)" stroke-width="0.8"/><rect x="815.50" y="470.18" width="5.70" height="22.37" fill="#9b7591"/><rect x="815.85" y="470.53" width="5.00" height="21.67" fill="none" stroke="rgba(50,40,60,0.34)" stroke-width="0.8"/><rect x="815.50" y="492.54" width="5.70" height="12.22" fill="#8fa9a5"/><rect x="815.85" y="492.89" width="5.00" height="11.52" fill="none" stroke="rgba(50,40,60,0.34)" stroke-width="0.8"/><rect x="815.50" y="504.77" width="5.70" height="10.40" fill="#887a92"/><rect x="815.85" y="505.12" width="5.00" height="9.70" fill="none" stroke="rgba(50,40,60,0.34)" stroke-width="0.8"/><rect x="815.50" y="515.17" width="5.70" height="13.33" fill="#bfbb9f"/><rect x="815.85" y="515.52" width="5.00" height="12.63" fill="none" stroke="rgba(50,40,60,0.34)" stroke-width="0.8"/><rect x="815.80" y="443.43" width="5.10" height="85.07" fill="none" stroke="rgba(60,60,80,0.18)" stroke-width="0.6"/><rect x="821.20" y="470.44" width="5.70" height="27.83" fill="#7d909e"/><rect x="821.55" y="470.79" width="5.00" height="27.13" fill="none" stroke="rgba(50,40,60,0.34)" stroke-width="0.8"/><rect x="821.20" y="498.26" width="5.70" height="13.00" fill="#9b7591"/><rect x="821.55" y="498.61" width="5.00" height="12.30" fill="none" stroke="rgba(50,40,60,0.34)" stroke-width="0.8"/><rect x="821.20" y="511.27" width="5.70" height="7.80" fill="#8fa9a5"/><rect x="821.55" y="511.62" width="5.00" height="7.10" fill="none" stroke="rgba(50,40,60,0.34)" stroke-width="0.8"/><rect x="821.20" y="519.07" width="5.70" height="9.43" fill="#bfbb9f"/><rect x="821.55" y="519.42" width="5.00" height="8.73" fill="none" stroke="rgba(50,40,60,0.34)" stroke-width="0.8"/><rect x="821.50" y="470.74" width="5.10" height="57.76" fill="none" stroke="rgba(60,60,80,0.18)" stroke-width="0.6"/><rect x="826.90" y="486.04" width="5.70" height="23.15" fill="#7d909e"/><rect x="827.25" y="486.39" width="5.00" height="22.45" fill="none" stroke="rgba(50,40,60,0.34)" stroke-width="0.8"/><rect x="826.90" y="509.19" width="5.70" height="11.96" fill="#9b7591"/><rect x="827.25" y="509.54" width="5.00" height="11.26" fill="none" stroke="rgba(50,40,60,0.34)" stroke-width="0.8"/><rect x="826.90" y="521.15" width="5.70" height="7.35" fill="#887a92"/><rect x="827.25" y="521.50" width="5.00" height="6.65" fill="none" stroke="rgba(50,40,60,0.34)" stroke-width="0.8"/><rect x="827.20" y="486.34" width="5.10" height="42.16" fill="none" stroke="rgba(60,60,80,0.18)" stroke-width="0.6"/><rect x="832.60" y="508.67" width="5.70" height="3.90" fill="#7d909e"/><rect x="832.95" y="509.02" width="5.00" height="3.20" fill="none" stroke="rgba(50,40,60,0.34)" stroke-width="0.8"/><rect x="832.60" y="512.57" width="5.70" height="15.93" fill="#9b7591"/><rect x="832.95" y="512.92" width="5.00" height="15.23" fill="none" stroke="rgba(50,40,60,0.34)" stroke-width="0.8"/><rect x="832.90" y="508.97" width="5.10" height="19.53" fill="none" stroke="rgba(60,60,80,0.18)" stroke-width="0.6"/><rect x="838.30" y="501.38" width="5.70" height="8.58" fill="#7d909e"/><rect x="838.65" y="501.73" width="5.00" height="7.88" fill="none" stroke="rgba(50,40,60,0.34)" stroke-width="0.8"/><rect x="838.30" y="509.97" width="5.70" height="3.90" fill="#9b7591"/><rect x="838.65" y="510.32" width="5.00" height="3.20" fill="none" stroke="rgba(50,40,60,0.34)" stroke-width="0.8"/><rect x="838.30" y="513.87" width="5.70" height="14.63" fill="#8fa9a5"/><rect x="838.65" y="514.22" width="5.00" height="13.93" fill="none" stroke="rgba(50,40,60,0.34)" stroke-width="0.8"/><rect x="838.60" y="501.68" width="5.10" height="26.82" fill="none" stroke="rgba(60,60,80,0.18)" stroke-width="0.6"/><rect x="844.00" y="507.89" width="5.70" height="15.08" fill="#7d909e"/><rect x="844.35" y="508.24" width="5.00" height="14.38" fill="none" stroke="rgba(50,40,60,0.34)" stroke-width="0.8"/><rect x="844.00" y="522.97" width="5.70" height="5.53" fill="#8fa9a5"/><rect x="844.35" y="523.32" width="5.00" height="4.83" fill="none" stroke="rgba(50,40,60,0.34)" stroke-width="0.8"/><rect x="844.30" y="508.19" width="5.10" height="20.31" fill="none" stroke="rgba(60,60,80,0.18)" stroke-width="0.6"/><rect x="849.70" y="452.85" width="5.70" height="30.92" fill="#7d909e"/><rect x="850.05" y="453.20" width="5.00" height="30.22" fill="none" stroke="rgba(50,40,60,0.34)" stroke-width="0.8"/><rect x="849.70" y="483.77" width="5.70" height="9.84" fill="#9b7591"/><rect x="850.05" y="484.12" width="5.00" height="9.14" fill="none" stroke="rgba(50,40,60,0.34)" stroke-width="0.8"/><rect x="849.70" y="493.60" width="5.70" height="22.48" fill="#8fa9a5"/><rect x="850.05" y="493.95" width="5.00" height="21.78" fill="none" stroke="rgba(50,40,60,0.34)" stroke-width="0.8"/><rect x="849.70" y="516.09" width="5.70" height="12.41" fill="#bfbb9f"/><rect x="850.05" y="516.44" width="5.00" height="11.71" fill="none" stroke="rgba(50,40,60,0.34)" stroke-width="0.8"/><rect x="850.00" y="453.15" width="5.10" height="75.35" fill="none" stroke="rgba(60,60,80,0.18)" stroke-width="0.6"/><rect x="855.40" y="456.22" width="5.70" height="31.76" fill="#7d909e"/><rect x="855.75" y="456.57" width="5.00" height="31.06" fill="none" stroke="rgba(50,40,60,0.34)" stroke-width="0.8"/><rect x="855.40" y="487.98" width="5.70" height="7.03" fill="#9b7591"/><rect x="855.75" y="488.33" width="5.00" height="6.33" fill="none" stroke="rgba(50,40,60,0.34)" stroke-width="0.8"/><rect x="855.40" y="495.01" width="5.70" height="12.65" fill="#8fa9a5"/><rect x="855.75" y="495.36" width="5.00" height="11.95" fill="none" stroke="rgba(50,40,60,0.34)" stroke-width="0.8"/><rect x="855.40" y="507.66" width="5.70" height="20.84" fill="#bfbb9f"/><rect x="855.75" y="508.01" width="5.00" height="20.14" fill="none" stroke="rgba(50,40,60,0.34)" stroke-width="0.8"/><rect x="855.70" y="456.52" width="5.10" height="71.98" fill="none" stroke="rgba(60,60,80,0.18)" stroke-width="0.6"/><rect x="861.10" y="421.93" width="5.70" height="40.75" fill="#7d909e"/><rect x="861.45" y="422.28" width="5.00" height="40.05" fill="none" stroke="rgba(50,40,60,0.34)" stroke-width="0.8"/><rect x="861.10" y="462.69" width="5.70" height="19.67" fill="#9b7591"/><rect x="861.45" y="463.04" width="5.00" height="18.97" fill="none" stroke="rgba(50,40,60,0.34)" stroke-width="0.8"/><rect x="861.10" y="482.36" width="5.70" height="22.48" fill="#8fa9a5"/><rect x="861.45" y="482.71" width="5.00" height="21.78" fill="none" stroke="rgba(50,40,60,0.34)" stroke-width="0.8"/><rect x="861.10" y="504.85" width="5.70" height="9.84" fill="#887a92"/><rect x="861.45" y="505.20" width="5.00" height="9.14" fill="none" stroke="rgba(50,40,60,0.34)" stroke-width="0.8"/><rect x="861.10" y="514.68" width="5.70" height="13.82" fill="#bfbb9f"/><rect x="861.45" y="515.03" width="5.00" height="13.12" fill="none" stroke="rgba(50,40,60,0.34)" stroke-width="0.8"/><rect x="861.40" y="422.23" width="5.10" height="106.27" fill="none" stroke="rgba(60,60,80,0.18)" stroke-width="0.6"/><rect x="866.80" y="409.29" width="5.70" height="23.89" fill="#7d909e"/><rect x="867.15" y="409.64" width="5.00" height="23.19" fill="none" stroke="rgba(50,40,60,0.34)" stroke-width="0.8"/><rect x="866.80" y="433.18" width="5.70" height="14.05" fill="#9b7591"/><rect x="867.15" y="433.53" width="5.00" height="13.35" fill="none" stroke="rgba(50,40,60,0.34)" stroke-width="0.8"/><rect x="866.80" y="447.23" width="5.70" height="30.92" fill="#8fa9a5"/><rect x="867.15" y="447.58" width="5.00" height="30.22" fill="none" stroke="rgba(50,40,60,0.34)" stroke-width="0.8"/><rect x="866.80" y="478.15" width="5.70" height="23.89" fill="#887a92"/><rect x="867.15" y="478.50" width="5.00" height="23.19" fill="none" stroke="rgba(50,40,60,0.34)" stroke-width="0.8"/><rect x="866.80" y="502.03" width="5.70" height="26.47" fill="#bfbb9f"/><rect x="867.15" y="502.38" width="5.00" height="25.77" fill="none" stroke="rgba(50,40,60,0.34)" stroke-width="0.8"/><rect x="867.10" y="409.59" width="5.10" height="118.91" fill="none" stroke="rgba(60,60,80,0.18)" stroke-width="0.6"/><rect x="872.50" y="485.17" width="5.70" height="29.51" fill="#7d909e"/><rect x="872.85" y="485.52" width="5.00" height="28.81" fill="none" stroke="rgba(50,40,60,0.34)" stroke-width="0.8"/><rect x="872.50" y="514.68" width="5.70" height="5.62" fill="#9b7591"/><rect x="872.85" y="515.03" width="5.00" height="4.92" fill="none" stroke="rgba(50,40,60,0.34)" stroke-width="0.8"/><rect x="872.50" y="520.30" width="5.70" height="8.20" fill="#8fa9a5"/><rect x="872.85" y="520.65" width="5.00" height="7.50" fill="none" stroke="rgba(50,40,60,0.34)" stroke-width="0.8"/><rect x="872.80" y="485.47" width="5.10" height="43.03" fill="none" stroke="rgba(60,60,80,0.18)" stroke-width="0.6"/><rect x="878.20" y="489.39" width="5.70" height="25.30" fill="#7d909e"/><rect x="878.55" y="489.74" width="5.00" height="24.60" fill="none" stroke="rgba(50,40,60,0.34)" stroke-width="0.8"/><rect x="878.20" y="514.68" width="5.70" height="5.62" fill="#9b7591"/><rect x="878.55" y="515.03" width="5.00" height="4.92" fill="none" stroke="rgba(50,40,60,0.34)" stroke-width="0.8"/><rect x="878.20" y="520.30" width="5.70" height="8.20" fill="#8fa9a5"/><rect x="878.55" y="520.65" width="5.00" height="7.50" fill="none" stroke="rgba(50,40,60,0.34)" stroke-width="0.8"/><rect x="878.50" y="489.69" width="5.10" height="38.81" fill="none" stroke="rgba(60,60,80,0.18)" stroke-width="0.6"/><rect x="883.90" y="301.13" width="5.70" height="122.27" fill="#2ea6ea"/><rect x="884.25" y="301.48" width="5.00" height="121.57" fill="none" stroke="rgba(50,40,60,0.34)" stroke-width="0.8"/><rect x="883.90" y="423.40" width="5.70" height="18.21" fill="#f41c9e"/><rect x="884.25" y="423.75" width="5.00" height="17.51" fill="none" stroke="rgba(50,40,60,0.2)" stroke-width="0.8"/><rect x="883.90" y="441.61" width="5.70" height="26.80" fill="#22b8a0"/><rect x="884.25" y="441.96" width="5.00" height="26.10" fill="none" stroke="rgba(50,40,60,0.2)" stroke-width="0.8"/><rect x="883.90" y="468.40" width="5.70" height="27.32" fill="#a865d8"/><rect x="884.25" y="468.75" width="5.00" height="26.62" fill="none" stroke="rgba(50,40,60,0.2)" stroke-width="0.8"/><rect x="883.90" y="495.72" width="5.70" height="23.41" fill="#c2c033"/><rect x="884.25" y="496.07" width="5.00" height="22.71" fill="none" stroke="rgba(50,40,60,0.2)" stroke-width="0.8"/><rect x="883.90" y="519.13" width="5.70" height="3.90" fill="#ff8012"/><rect x="884.25" y="519.48" width="5.00" height="3.20" fill="none" stroke="rgba(50,40,60,0.2)" stroke-width="0.8"/><rect x="883.90" y="523.03" width="5.70" height="5.47" fill="#a5634e"/><rect x="884.25" y="523.38" width="5.00" height="4.77" fill="none" stroke="rgba(50,40,60,0.2)" stroke-width="0.8"/><rect x="884.20" y="301.43" width="5.10" height="227.07" fill="none" stroke="rgba(60,60,80,0.18)" stroke-width="0.6"/><rect x="889.60" y="368.77" width="5.70" height="125.65" fill="#2ea6ea"/><rect x="889.95" y="369.12" width="5.00" height="124.95" fill="none" stroke="rgba(50,40,60,0.34)" stroke-width="0.8"/><rect x="889.60" y="494.42" width="5.70" height="14.31" fill="#f41c9e"/><rect x="889.95" y="494.77" width="5.00" height="13.61" fill="none" stroke="rgba(50,40,60,0.2)" stroke-width="0.8"/><rect x="889.60" y="508.73" width="5.70" height="1.30" fill="#22b8a0"/><rect x="889.95" y="509.08" width="5.00" height="0.60" fill="none" stroke="rgba(50,40,60,0.2)" stroke-width="0.8"/><rect x="889.60" y="510.03" width="5.70" height="9.11" fill="#a865d8"/><rect x="889.95" y="510.38" width="5.00" height="8.41" fill="none" stroke="rgba(50,40,60,0.2)" stroke-width="0.8"/><rect x="889.60" y="519.13" width="5.70" height="3.90" fill="#ff8012"/><rect x="889.95" y="519.48" width="5.00" height="3.20" fill="none" stroke="rgba(50,40,60,0.2)" stroke-width="0.8"/><rect x="889.60" y="523.03" width="5.70" height="5.47" fill="#a5634e"/><rect x="889.95" y="523.38" width="5.00" height="4.77" fill="none" stroke="rgba(50,40,60,0.2)" stroke-width="0.8"/><rect x="889.90" y="369.07" width="5.10" height="159.43" fill="none" stroke="rgba(60,60,80,0.18)" stroke-width="0.6"/><rect x="895.30" y="325.84" width="5.70" height="126.95" fill="#2ea6ea"/><rect x="895.65" y="326.19" width="5.00" height="126.25" fill="none" stroke="rgba(50,40,60,0.34)" stroke-width="0.8"/><rect x="895.30" y="452.79" width="5.70" height="16.91" fill="#f41c9e"/><rect x="895.65" y="453.14" width="5.00" height="16.21" fill="none" stroke="rgba(50,40,60,0.2)" stroke-width="0.8"/><rect x="895.30" y="469.70" width="5.70" height="18.21" fill="#22b8a0"/><rect x="895.65" y="470.05" width="5.00" height="17.51" fill="none" stroke="rgba(50,40,60,0.2)" stroke-width="0.8"/><rect x="895.30" y="487.91" width="5.70" height="18.21" fill="#a865d8"/><rect x="895.65" y="488.26" width="5.00" height="17.51" fill="none" stroke="rgba(50,40,60,0.2)" stroke-width="0.8"/><rect x="895.30" y="506.12" width="5.70" height="15.61" fill="#c2c033"/><rect x="895.65" y="506.47" width="5.00" height="14.91" fill="none" stroke="rgba(50,40,60,0.2)" stroke-width="0.8"/><rect x="895.30" y="521.73" width="5.70" height="2.60" fill="#ff8012"/><rect x="895.65" y="522.08" width="5.00" height="1.90" fill="none" stroke="rgba(50,40,60,0.2)" stroke-width="0.8"/><rect x="895.30" y="524.33" width="5.70" height="4.17" fill="#a5634e"/><rect x="895.65" y="524.68" width="5.00" height="3.47" fill="none" stroke="rgba(50,40,60,0.2)" stroke-width="0.8"/><rect x="895.60" y="326.14" width="5.10" height="202.36" fill="none" stroke="rgba(60,60,80,0.18)" stroke-width="0.6"/><rect x="901.00" y="342.23" width="5.70" height="152.19" fill="#2ea6ea"/><rect x="901.35" y="342.58" width="5.00" height="151.49" fill="none" stroke="rgba(50,40,60,0.34)" stroke-width="0.8"/><rect x="901.00" y="494.42" width="5.70" height="16.91" fill="#f41c9e"/><rect x="901.35" y="494.77" width="5.00" height="16.21" fill="none" stroke="rgba(50,40,60,0.2)" stroke-width="0.8"/><rect x="901.00" y="511.33" width="5.70" height="2.08" fill="#22b8a0"/><rect x="901.35" y="511.68" width="5.00" height="1.38" fill="none" stroke="rgba(50,40,60,0.2)" stroke-width="0.8"/><rect x="901.00" y="513.41" width="5.70" height="5.72" fill="#a865d8"/><rect x="901.35" y="513.76" width="5.00" height="5.02" fill="none" stroke="rgba(50,40,60,0.2)" stroke-width="0.8"/><rect x="901.00" y="519.13" width="5.70" height="2.60" fill="#ff8012"/><rect x="901.35" y="519.48" width="5.00" height="1.90" fill="none" stroke="rgba(50,40,60,0.2)" stroke-width="0.8"/><rect x="901.00" y="521.73" width="5.70" height="6.77" fill="#a5634e"/><rect x="901.35" y="522.08" width="5.00" height="6.07" fill="none" stroke="rgba(50,40,60,0.2)" stroke-width="0.8"/><rect x="901.30" y="342.53" width="5.10" height="185.97" fill="none" stroke="rgba(60,60,80,0.18)" stroke-width="0.6"/><rect x="906.70" y="294.11" width="5.70" height="122.79" fill="#2ea6ea"/><rect x="907.05" y="294.46" width="5.00" height="122.09" fill="none" stroke="rgba(50,40,60,0.34)" stroke-width="0.8"/><rect x="906.70" y="416.89" width="5.70" height="21.07" fill="#f41c9e"/><rect x="907.05" y="417.24" width="5.00" height="20.37" fill="none" stroke="rgba(50,40,60,0.2)" stroke-width="0.8"/><rect x="906.70" y="437.97" width="5.70" height="25.23" fill="#22b8a0"/><rect x="907.05" y="438.32" width="5.00" height="24.53" fill="none" stroke="rgba(50,40,60,0.2)" stroke-width="0.8"/><rect x="906.70" y="463.20" width="5.70" height="32.00" fill="#a865d8"/><rect x="907.05" y="463.55" width="5.00" height="31.30" fill="none" stroke="rgba(50,40,60,0.2)" stroke-width="0.8"/><rect x="906.70" y="495.20" width="5.70" height="23.41" fill="#c2c033"/><rect x="907.05" y="495.55" width="5.00" height="22.71" fill="none" stroke="rgba(50,40,60,0.2)" stroke-width="0.8"/><rect x="906.70" y="518.61" width="5.70" height="2.60" fill="#ff8012"/><rect x="907.05" y="518.96" width="5.00" height="1.90" fill="none" stroke="rgba(50,40,60,0.2)" stroke-width="0.8"/><rect x="906.70" y="521.21" width="5.70" height="7.29" fill="#a5634e"/><rect x="907.05" y="521.56" width="5.00" height="6.59" fill="none" stroke="rgba(50,40,60,0.2)" stroke-width="0.8"/><rect x="907.00" y="294.41" width="5.10" height="234.09" fill="none" stroke="rgba(60,60,80,0.18)" stroke-width="0.6"/><rect x="912.40" y="308.41" width="5.70" height="152.19" fill="#2ea6ea"/><rect x="912.75" y="308.76" width="5.00" height="151.49" fill="none" stroke="rgba(50,40,60,0.34)" stroke-width="0.8"/><rect x="912.40" y="460.60" width="5.70" height="21.33" fill="#f41c9e"/><rect x="912.75" y="460.95" width="5.00" height="20.63" fill="none" stroke="rgba(50,40,60,0.2)" stroke-width="0.8"/><rect x="912.40" y="481.93" width="5.70" height="13.27" fill="#22b8a0"/><rect x="912.75" y="482.28" width="5.00" height="12.57" fill="none" stroke="rgba(50,40,60,0.2)" stroke-width="0.8"/><rect x="912.40" y="495.20" width="5.70" height="18.73" fill="#a865d8"/><rect x="912.75" y="495.55" width="5.00" height="18.03" fill="none" stroke="rgba(50,40,60,0.2)" stroke-width="0.8"/><rect x="912.40" y="513.93" width="5.70" height="10.41" fill="#c2c033"/><rect x="912.75" y="514.28" width="5.00" height="9.71" fill="none" stroke="rgba(50,40,60,0.2)" stroke-width="0.8"/><rect x="912.40" y="524.33" width="5.70" height="4.17" fill="#ff8012"/><rect x="912.75" y="524.68" width="5.00" height="3.47" fill="none" stroke="rgba(50,40,60,0.2)" stroke-width="0.8"/><rect x="912.70" y="308.71" width="5.10" height="219.79" fill="none" stroke="rgba(60,60,80,0.18)" stroke-width="0.6"/><rect x="918.10" y="389.84" width="5.70" height="70.76" fill="#2ea6ea"/><rect x="918.45" y="390.19" width="5.00" height="70.06" fill="none" stroke="rgba(50,40,60,0.34)" stroke-width="0.8"/><rect x="918.10" y="460.60" width="5.70" height="15.61" fill="#f41c9e"/><rect x="918.45" y="460.95" width="5.00" height="14.91" fill="none" stroke="rgba(50,40,60,0.2)" stroke-width="0.8"/><rect x="918.10" y="476.21" width="5.70" height="14.31" fill="#22b8a0"/><rect x="918.45" y="476.56" width="5.00" height="13.61" fill="none" stroke="rgba(50,40,60,0.2)" stroke-width="0.8"/><rect x="918.10" y="490.52" width="5.70" height="18.21" fill="#a865d8"/><rect x="918.45" y="490.87" width="5.00" height="17.51" fill="none" stroke="rgba(50,40,60,0.2)" stroke-width="0.8"/><rect x="918.10" y="508.73" width="5.70" height="14.31" fill="#c2c033"/><rect x="918.45" y="509.08" width="5.00" height="13.61" fill="none" stroke="rgba(50,40,60,0.2)" stroke-width="0.8"/><rect x="918.10" y="523.03" width="5.70" height="2.60" fill="#ff8012"/><rect x="918.45" y="523.38" width="5.00" height="1.90" fill="none" stroke="rgba(50,40,60,0.2)" stroke-width="0.8"/><rect x="918.10" y="525.63" width="5.70" height="2.87" fill="#a5634e"/><rect x="918.45" y="525.98" width="5.00" height="2.17" fill="none" stroke="rgba(50,40,60,0.2)" stroke-width="0.8"/><rect x="918.40" y="390.14" width="5.10" height="138.36" fill="none" stroke="rgba(60,60,80,0.18)" stroke-width="0.6"/><rect x="923.80" y="354.72" width="5.70" height="53.07" fill="#2ea6ea"/><rect x="924.15" y="355.07" width="5.00" height="52.37" fill="none" stroke="rgba(50,40,60,0.34)" stroke-width="0.8"/><rect x="923.80" y="407.79" width="5.70" height="25.49" fill="#f41c9e"/><rect x="924.15" y="408.14" width="5.00" height="24.79" fill="none" stroke="rgba(50,40,60,0.2)" stroke-width="0.8"/><rect x="923.80" y="433.28" width="5.70" height="27.84" fill="#22b8a0"/><rect x="924.15" y="433.63" width="5.00" height="27.14" fill="none" stroke="rgba(50,40,60,0.2)" stroke-width="0.8"/><rect x="923.80" y="461.12" width="5.70" height="30.70" fill="#a865d8"/><rect x="924.15" y="461.47" width="5.00" height="30.00" fill="none" stroke="rgba(50,40,60,0.2)" stroke-width="0.8"/><rect x="923.80" y="491.82" width="5.70" height="28.62" fill="#c2c033"/><rect x="924.15" y="492.17" width="5.00" height="27.92" fill="none" stroke="rgba(50,40,60,0.2)" stroke-width="0.8"/><rect x="923.80" y="520.43" width="5.70" height="5.20" fill="#ff8012"/><rect x="924.15" y="520.78" width="5.00" height="4.50" fill="none" stroke="rgba(50,40,60,0.2)" stroke-width="0.8"/><rect x="923.80" y="525.63" width="5.70" height="2.87" fill="#a5634e"/><rect x="924.15" y="525.98" width="5.00" height="2.17" fill="none" stroke="rgba(50,40,60,0.2)" stroke-width="0.8"/><rect x="924.10" y="355.02" width="5.10" height="173.48" fill="none" stroke="rgba(60,60,80,0.18)" stroke-width="0.6"/><rect x="929.50" y="444.21" width="5.70" height="57.23" fill="#2ea6ea"/><rect x="929.85" y="444.56" width="5.00" height="56.53" fill="none" stroke="rgba(50,40,60,0.34)" stroke-width="0.8"/><rect x="929.50" y="501.44" width="5.70" height="16.39" fill="#f41c9e"/><rect x="929.85" y="501.79" width="5.00" height="15.69" fill="none" stroke="rgba(50,40,60,0.2)" stroke-width="0.8"/><rect x="929.50" y="517.83" width="5.70" height="5.20" fill="#a865d8"/><rect x="929.85" y="518.18" width="5.00" height="4.50" fill="none" stroke="rgba(50,40,60,0.2)" stroke-width="0.8"/><rect x="929.50" y="523.03" width="5.70" height="5.47" fill="#ff8012"/><rect x="929.85" y="523.38" width="5.00" height="4.77" fill="none" stroke="rgba(50,40,60,0.2)" stroke-width="0.8"/><rect x="929.80" y="444.51" width="5.10" height="83.99" fill="none" stroke="rgba(60,60,80,0.18)" stroke-width="0.6"/><rect x="935.20" y="401.55" width="5.70" height="57.23" fill="#2ea6ea"/><rect x="935.55" y="401.90" width="5.00" height="56.53" fill="none" stroke="rgba(50,40,60,0.34)" stroke-width="0.8"/><rect x="935.20" y="458.78" width="5.70" height="14.83" fill="#f41c9e"/><rect x="935.55" y="459.13" width="5.00" height="14.13" fill="none" stroke="rgba(50,40,60,0.2)" stroke-width="0.8"/><rect x="935.20" y="473.61" width="5.70" height="14.83" fill="#22b8a0"/><rect x="935.55" y="473.96" width="5.00" height="14.13" fill="none" stroke="rgba(50,40,60,0.2)" stroke-width="0.8"/><rect x="935.20" y="488.43" width="5.70" height="16.39" fill="#a865d8"/><rect x="935.55" y="488.78" width="5.00" height="15.69" fill="none" stroke="rgba(50,40,60,0.2)" stroke-width="0.8"/><rect x="935.20" y="504.82" width="5.70" height="15.61" fill="#c2c033"/><rect x="935.55" y="505.17" width="5.00" height="14.91" fill="none" stroke="rgba(50,40,60,0.2)" stroke-width="0.8"/><rect x="935.20" y="520.43" width="5.70" height="5.20" fill="#ff8012"/><rect x="935.55" y="520.78" width="5.00" height="4.50" fill="none" stroke="rgba(50,40,60,0.2)" stroke-width="0.8"/><rect x="935.20" y="525.63" width="5.70" height="2.87" fill="#a5634e"/><rect x="935.55" y="525.98" width="5.00" height="2.17" fill="none" stroke="rgba(50,40,60,0.2)" stroke-width="0.8"/><rect x="935.50" y="401.85" width="5.10" height="126.65" fill="none" stroke="rgba(60,60,80,0.18)" stroke-width="0.6"/><rect x="940.90" y="383.34" width="5.70" height="66.86" fill="#2ea6ea"/><rect x="941.25" y="383.69" width="5.00" height="66.16" fill="none" stroke="rgba(50,40,60,0.34)" stroke-width="0.8"/><rect x="940.90" y="450.19" width="5.70" height="23.41" fill="#f41c9e"/><rect x="941.25" y="450.54" width="5.00" height="22.71" fill="none" stroke="rgba(50,40,60,0.2)" stroke-width="0.8"/><rect x="940.90" y="473.61" width="5.70" height="14.31" fill="#22b8a0"/><rect x="941.25" y="473.96" width="5.00" height="13.61" fill="none" stroke="rgba(50,40,60,0.2)" stroke-width="0.8"/><rect x="940.90" y="487.91" width="5.70" height="18.21" fill="#a865d8"/><rect x="941.25" y="488.26" width="5.00" height="17.51" fill="none" stroke="rgba(50,40,60,0.2)" stroke-width="0.8"/><rect x="940.90" y="506.12" width="5.70" height="15.61" fill="#c2c033"/><rect x="941.25" y="506.47" width="5.00" height="14.91" fill="none" stroke="rgba(50,40,60,0.2)" stroke-width="0.8"/><rect x="940.90" y="521.73" width="5.70" height="4.68" fill="#ff8012"/><rect x="941.25" y="522.08" width="5.00" height="3.98" fill="none" stroke="rgba(50,40,60,0.2)" stroke-width="0.8"/><rect x="940.90" y="526.42" width="5.70" height="2.08" fill="#a5634e"/><rect x="941.25" y="526.77" width="5.00" height="1.38" fill="none" stroke="rgba(50,40,60,0.2)" stroke-width="0.8"/><rect x="941.20" y="383.64" width="5.10" height="144.86" fill="none" stroke="rgba(60,60,80,0.18)" stroke-width="0.6"/><rect x="946.60" y="376.57" width="5.70" height="46.83" fill="#2ea6ea"/><rect x="946.95" y="376.92" width="5.00" height="46.13" fill="none" stroke="rgba(50,40,60,0.34)" stroke-width="0.8"/><rect x="946.60" y="423.40" width="5.70" height="14.57" fill="#f41c9e"/><rect x="946.95" y="423.75" width="5.00" height="13.87" fill="none" stroke="rgba(50,40,60,0.2)" stroke-width="0.8"/><rect x="946.60" y="437.97" width="5.70" height="27.84" fill="#22b8a0"/><rect x="946.95" y="438.32" width="5.00" height="27.14" fill="none" stroke="rgba(50,40,60,0.2)" stroke-width="0.8"/><rect x="946.60" y="465.80" width="5.70" height="29.40" fill="#a865d8"/><rect x="946.95" y="466.15" width="5.00" height="28.70" fill="none" stroke="rgba(50,40,60,0.2)" stroke-width="0.8"/><rect x="946.60" y="495.20" width="5.70" height="27.84" fill="#c2c033"/><rect x="946.95" y="495.55" width="5.00" height="27.14" fill="none" stroke="rgba(50,40,60,0.2)" stroke-width="0.8"/><rect x="946.60" y="523.03" width="5.70" height="3.38" fill="#ff8012"/><rect x="946.95" y="523.38" width="5.00" height="2.68" fill="none" stroke="rgba(50,40,60,0.2)" stroke-width="0.8"/><rect x="946.60" y="526.42" width="5.70" height="2.08" fill="#a5634e"/><rect x="946.95" y="526.77" width="5.00" height="1.38" fill="none" stroke="rgba(50,40,60,0.2)" stroke-width="0.8"/><rect x="946.90" y="376.87" width="5.10" height="151.63" fill="none" stroke="rgba(60,60,80,0.18)" stroke-width="0.6"/><rect x="952.30" y="444.21" width="5.70" height="68.42" fill="#2ea6ea"/><rect x="952.65" y="444.56" width="5.00" height="67.72" fill="none" stroke="rgba(50,40,60,0.34)" stroke-width="0.8"/><rect x="952.30" y="512.63" width="5.70" height="5.20" fill="#f41c9e"/><rect x="952.65" y="512.98" width="5.00" height="4.50" fill="none" stroke="rgba(50,40,60,0.2)" stroke-width="0.8"/><rect x="952.30" y="517.83" width="5.70" height="2.08" fill="#22b8a0"/><rect x="952.65" y="518.18" width="5.00" height="1.38" fill="none" stroke="rgba(50,40,60,0.2)" stroke-width="0.8"/><rect x="952.30" y="519.91" width="5.70" height="3.12" fill="#a865d8"/><rect x="952.65" y="520.26" width="5.00" height="2.42" fill="none" stroke="rgba(50,40,60,0.2)" stroke-width="0.8"/><rect x="952.30" y="523.03" width="5.70" height="5.47" fill="#ff8012"/><rect x="952.65" y="523.38" width="5.00" height="4.77" fill="none" stroke="rgba(50,40,60,0.2)" stroke-width="0.8"/><rect x="952.60" y="444.51" width="5.10" height="83.99" fill="none" stroke="rgba(60,60,80,0.18)" stroke-width="0.6"/><rect x="958.00" y="393.74" width="5.70" height="99.90" fill="#2ea6ea"/><rect x="958.35" y="394.09" width="5.00" height="99.20" fill="none" stroke="rgba(50,40,60,0.34)" stroke-width="0.8"/><rect x="958.00" y="493.64" width="5.70" height="11.19" fill="#f41c9e"/><rect x="958.35" y="493.99" width="5.00" height="10.49" fill="none" stroke="rgba(50,40,60,0.2)" stroke-width="0.8"/><rect x="958.00" y="504.82" width="5.70" height="18.21" fill="#a865d8"/><rect x="958.35" y="505.17" width="5.00" height="17.51" fill="none" stroke="rgba(50,40,60,0.2)" stroke-width="0.8"/><rect x="958.00" y="523.03" width="5.70" height="3.38" fill="#ff8012"/><rect x="958.35" y="523.38" width="5.00" height="2.68" fill="none" stroke="rgba(50,40,60,0.2)" stroke-width="0.8"/><rect x="958.00" y="526.42" width="5.70" height="2.08" fill="#a5634e"/><rect x="958.35" y="526.77" width="5.00" height="1.38" fill="none" stroke="rgba(50,40,60,0.2)" stroke-width="0.8"/><rect x="958.30" y="394.04" width="5.10" height="134.46" fill="none" stroke="rgba(60,60,80,0.18)" stroke-width="0.6"/><rect x="963.70" y="289.68" width="5.70" height="88.45" fill="#7d909e"/><rect x="964.05" y="290.03" width="5.00" height="87.75" fill="none" stroke="rgba(50,40,60,0.34)" stroke-width="0.8"/><rect x="963.70" y="378.13" width="5.70" height="22.63" fill="#9b7591"/><rect x="964.05" y="378.48" width="5.00" height="21.93" fill="none" stroke="rgba(50,40,60,0.34)" stroke-width="0.8"/><rect x="963.70" y="400.76" width="5.70" height="28.62" fill="#8fa9a5"/><rect x="964.05" y="401.11" width="5.00" height="27.92" fill="none" stroke="rgba(50,40,60,0.34)" stroke-width="0.8"/><rect x="963.70" y="429.38" width="5.70" height="60.61" fill="#887a92"/><rect x="964.05" y="429.73" width="5.00" height="59.91" fill="none" stroke="rgba(50,40,60,0.34)" stroke-width="0.8"/><rect x="963.70" y="489.99" width="5.70" height="31.74" fill="#bfbb9f"/><rect x="964.05" y="490.34" width="5.00" height="31.04" fill="none" stroke="rgba(50,40,60,0.34)" stroke-width="0.8"/><rect x="963.70" y="521.73" width="5.70" height="6.77" fill="#8a807c"/><rect x="964.05" y="522.08" width="5.00" height="6.07" fill="none" stroke="rgba(50,40,60,0.34)" stroke-width="0.8"/><rect x="964.00" y="289.98" width="5.10" height="238.52" fill="none" stroke="rgba(60,60,80,0.18)" stroke-width="0.6"/><rect x="969.40" y="354.72" width="5.70" height="92.87" fill="#7d909e"/><rect x="969.75" y="355.07" width="5.00" height="92.17" fill="none" stroke="rgba(50,40,60,0.34)" stroke-width="0.8"/><rect x="969.40" y="447.59" width="5.70" height="24.19" fill="#9b7591"/><rect x="969.75" y="447.94" width="5.00" height="23.49" fill="none" stroke="rgba(50,40,60,0.34)" stroke-width="0.8"/><rect x="969.40" y="471.78" width="5.70" height="10.41" fill="#8fa9a5"/><rect x="969.75" y="472.13" width="5.00" height="9.71" fill="none" stroke="rgba(50,40,60,0.34)" stroke-width="0.8"/><rect x="969.40" y="482.19" width="5.70" height="29.14" fill="#887a92"/><rect x="969.75" y="482.54" width="5.00" height="28.44" fill="none" stroke="rgba(50,40,60,0.34)" stroke-width="0.8"/><rect x="969.40" y="511.33" width="5.70" height="13.01" fill="#bfbb9f"/><rect x="969.75" y="511.68" width="5.00" height="12.31" fill="none" stroke="rgba(50,40,60,0.34)" stroke-width="0.8"/><rect x="969.40" y="524.33" width="5.70" height="4.17" fill="#8a807c"/><rect x="969.75" y="524.68" width="5.00" height="3.47" fill="none" stroke="rgba(50,40,60,0.34)" stroke-width="0.8"/><rect x="969.70" y="355.02" width="5.10" height="173.48" fill="none" stroke="rgba(60,60,80,0.18)" stroke-width="0.6"/><rect x="975.10" y="317.52" width="5.70" height="73.62" fill="#7d909e"/><rect x="975.45" y="317.87" width="5.00" height="72.92" fill="none" stroke="rgba(50,40,60,0.34)" stroke-width="0.8"/><rect x="975.10" y="391.14" width="5.70" height="18.21" fill="#9b7591"/><rect x="975.45" y="391.49" width="5.00" height="17.51" fill="none" stroke="rgba(50,40,60,0.34)" stroke-width="0.8"/><rect x="975.10" y="409.35" width="5.70" height="27.84" fill="#8fa9a5"/><rect x="975.45" y="409.70" width="5.00" height="27.14" fill="none" stroke="rgba(50,40,60,0.34)" stroke-width="0.8"/><rect x="975.10" y="437.19" width="5.70" height="50.73" fill="#887a92"/><rect x="975.45" y="437.54" width="5.00" height="50.03" fill="none" stroke="rgba(50,40,60,0.34)" stroke-width="0.8"/><rect x="975.10" y="487.91" width="5.70" height="35.90" fill="#bfbb9f"/><rect x="975.45" y="488.26" width="5.00" height="35.20" fill="none" stroke="rgba(50,40,60,0.34)" stroke-width="0.8"/><rect x="975.10" y="523.81" width="5.70" height="4.69" fill="#8a807c"/><rect x="975.45" y="524.16" width="5.00" height="3.99" fill="none" stroke="rgba(50,40,60,0.34)" stroke-width="0.8"/><rect x="975.40" y="317.82" width="5.10" height="210.68" fill="none" stroke="rgba(60,60,80,0.18)" stroke-width="0.6"/><rect x="980.80" y="299.31" width="5.70" height="68.42" fill="#7d909e"/><rect x="981.15" y="299.66" width="5.00" height="67.72" fill="none" stroke="rgba(50,40,60,0.34)" stroke-width="0.8"/><rect x="980.80" y="367.73" width="5.70" height="19.25" fill="#9b7591"/><rect x="981.15" y="368.08" width="5.00" height="18.55" fill="none" stroke="rgba(50,40,60,0.34)" stroke-width="0.8"/><rect x="980.80" y="386.98" width="5.70" height="33.82" fill="#8fa9a5"/><rect x="981.15" y="387.33" width="5.00" height="33.12" fill="none" stroke="rgba(50,40,60,0.34)" stroke-width="0.8"/><rect x="980.80" y="420.80" width="5.70" height="63.22" fill="#887a92"/><rect x="981.15" y="421.15" width="5.00" height="62.52" fill="none" stroke="rgba(50,40,60,0.34)" stroke-width="0.8"/><rect x="980.80" y="484.01" width="5.70" height="37.72" fill="#bfbb9f"/><rect x="981.15" y="484.36" width="5.00" height="37.02" fill="none" stroke="rgba(50,40,60,0.34)" stroke-width="0.8"/><rect x="980.80" y="521.73" width="5.70" height="6.77" fill="#8a807c"/><rect x="981.15" y="522.08" width="5.00" height="6.07" fill="none" stroke="rgba(50,40,60,0.34)" stroke-width="0.8"/><rect x="981.10" y="299.61" width="5.10" height="228.89" fill="none" stroke="rgba(60,60,80,0.18)" stroke-width="0.6"/><rect x="986.50" y="470.22" width="5.70" height="37.98" fill="#7d909e"/><rect x="986.85" y="470.57" width="5.00" height="37.28" fill="none" stroke="rgba(50,40,60,0.34)" stroke-width="0.8"/><rect x="986.50" y="508.20" width="5.70" height="20.30" fill="#9b7591"/><rect x="986.85" y="508.55" width="5.00" height="19.60" fill="none" stroke="rgba(50,40,60,0.34)" stroke-width="0.8"/><rect x="986.80" y="470.52" width="5.10" height="57.98" fill="none" stroke="rgba(60,60,80,0.18)" stroke-width="0.6"/><rect x="992.20" y="471.00" width="5.70" height="25.23" fill="#7d909e"/><rect x="992.55" y="471.35" width="5.00" height="24.53" fill="none" stroke="rgba(50,40,60,0.34)" stroke-width="0.8"/><rect x="992.20" y="496.24" width="5.70" height="18.99" fill="#9b7591"/><rect x="992.55" y="496.59" width="5.00" height="18.29" fill="none" stroke="rgba(50,40,60,0.34)" stroke-width="0.8"/><rect x="992.20" y="515.23" width="5.70" height="13.27" fill="#8fa9a5"/><rect x="992.55" y="515.58" width="5.00" height="12.57" fill="none" stroke="rgba(50,40,60,0.34)" stroke-width="0.8"/><rect x="992.50" y="471.30" width="5.10" height="57.20" fill="none" stroke="rgba(60,60,80,0.18)" stroke-width="0.6"/><rect x="997.90" y="499.62" width="5.70" height="8.58" fill="#7d909e"/><rect x="998.25" y="499.97" width="5.00" height="7.88" fill="none" stroke="rgba(50,40,60,0.34)" stroke-width="0.8"/><rect x="997.90" y="508.20" width="5.70" height="3.12" fill="#9b7591"/><rect x="998.25" y="508.55" width="5.00" height="2.42" fill="none" stroke="rgba(50,40,60,0.34)" stroke-width="0.8"/><rect x="997.90" y="511.33" width="5.70" height="17.17" fill="#8fa9a5"/><rect x="998.25" y="511.68" width="5.00" height="16.47" fill="none" stroke="rgba(50,40,60,0.34)" stroke-width="0.8"/><rect x="998.20" y="499.92" width="5.10" height="28.58" fill="none" stroke="rgba(60,60,80,0.18)" stroke-width="0.6"/><rect x="1003.60" y="478.03" width="5.70" height="18.99" fill="#7d909e"/><rect x="1003.95" y="478.38" width="5.00" height="18.29" fill="none" stroke="rgba(50,40,60,0.34)" stroke-width="0.8"/><rect x="1003.60" y="497.02" width="5.70" height="12.23" fill="#9b7591"/><rect x="1003.95" y="497.37" width="5.00" height="11.53" fill="none" stroke="rgba(50,40,60,0.34)" stroke-width="0.8"/><rect x="1003.60" y="509.25" width="5.70" height="19.25" fill="#8fa9a5"/><rect x="1003.95" y="509.60" width="5.00" height="18.55" fill="none" stroke="rgba(50,40,60,0.34)" stroke-width="0.8"/><rect x="1003.90" y="478.33" width="5.10" height="50.17" fill="none" stroke="rgba(60,60,80,0.18)" stroke-width="0.6"/><rect x="1009.30" y="485.31" width="5.70" height="26.01" fill="#7d909e"/><rect x="1009.65" y="485.66" width="5.00" height="25.31" fill="none" stroke="rgba(50,40,60,0.34)" stroke-width="0.8"/><rect x="1009.30" y="511.33" width="5.70" height="17.17" fill="#9b7591"/><rect x="1009.65" y="511.68" width="5.00" height="16.47" fill="none" stroke="rgba(50,40,60,0.34)" stroke-width="0.8"/><rect x="1009.60" y="485.61" width="5.10" height="42.89" fill="none" stroke="rgba(60,60,80,0.18)" stroke-width="0.6"/><rect x="1015.00" y="492.34" width="5.70" height="16.91" fill="#7d909e"/><rect x="1015.35" y="492.69" width="5.00" height="16.21" fill="none" stroke="rgba(50,40,60,0.34)" stroke-width="0.8"/><rect x="1015.00" y="509.25" width="5.70" height="8.58" fill="#9b7591"/><rect x="1015.35" y="509.60" width="5.00" height="7.88" fill="none" stroke="rgba(50,40,60,0.34)" stroke-width="0.8"/><rect x="1015.00" y="517.83" width="5.70" height="10.67" fill="#8fa9a5"/><rect x="1015.35" y="518.18" width="5.00" height="9.97" fill="none" stroke="rgba(50,40,60,0.34)" stroke-width="0.8"/><rect x="1015.30" y="492.64" width="5.10" height="35.86" fill="none" stroke="rgba(60,60,80,0.18)" stroke-width="0.6"/><rect x="1020.70" y="509.25" width="5.70" height="4.68" fill="#7d909e"/><rect x="1021.05" y="509.60" width="5.00" height="3.98" fill="none" stroke="rgba(50,40,60,0.34)" stroke-width="0.8"/><rect x="1020.70" y="513.93" width="5.70" height="2.60" fill="#9b7591"/><rect x="1021.05" y="514.28" width="5.00" height="1.90" fill="none" stroke="rgba(50,40,60,0.34)" stroke-width="0.8"/><rect x="1020.70" y="516.53" width="5.70" height="11.97" fill="#8fa9a5"/><rect x="1021.05" y="516.88" width="5.00" height="11.27" fill="none" stroke="rgba(50,40,60,0.34)" stroke-width="0.8"/><rect x="1021.00" y="509.55" width="5.10" height="18.95" fill="none" stroke="rgba(60,60,80,0.18)" stroke-width="0.6"/><rect x="1026.40" y="471.78" width="5.70" height="22.63" fill="#7d909e"/><rect x="1026.75" y="472.13" width="5.00" height="21.93" fill="none" stroke="rgba(50,40,60,0.34)" stroke-width="0.8"/><rect x="1026.40" y="494.42" width="5.70" height="14.31" fill="#9b7591"/><rect x="1026.75" y="494.77" width="5.00" height="13.61" fill="none" stroke="rgba(50,40,60,0.34)" stroke-width="0.8"/><rect x="1026.40" y="508.73" width="5.70" height="19.77" fill="#8fa9a5"/><rect x="1026.75" y="509.08" width="5.00" height="19.07" fill="none" stroke="rgba(50,40,60,0.34)" stroke-width="0.8"/><rect x="1026.70" y="472.08" width="5.10" height="56.42" fill="none" stroke="rgba(60,60,80,0.18)" stroke-width="0.6"/><rect x="1032.10" y="469.18" width="5.70" height="27.84" fill="#7d909e"/><rect x="1032.45" y="469.53" width="5.00" height="27.14" fill="none" stroke="rgba(50,40,60,0.34)" stroke-width="0.8"/><rect x="1032.10" y="497.02" width="5.70" height="18.99" fill="#9b7591"/><rect x="1032.45" y="497.37" width="5.00" height="18.29" fill="none" stroke="rgba(50,40,60,0.34)" stroke-width="0.8"/><rect x="1032.10" y="516.01" width="5.70" height="12.49" fill="#8fa9a5"/><rect x="1032.45" y="516.36" width="5.00" height="11.79" fill="none" stroke="rgba(50,40,60,0.34)" stroke-width="0.8"/><rect x="1032.40" y="469.48" width="5.10" height="59.02" fill="none" stroke="rgba(60,60,80,0.18)" stroke-width="0.6"/><rect x="1037.80" y="496.24" width="5.70" height="5.20" fill="#7d909e"/><rect x="1038.15" y="496.59" width="5.00" height="4.50" fill="none" stroke="rgba(50,40,60,0.34)" stroke-width="0.8"/><rect x="1037.80" y="501.44" width="5.70" height="4.68" fill="#9b7591"/><rect x="1038.15" y="501.79" width="5.00" height="3.98" fill="none" stroke="rgba(50,40,60,0.34)" stroke-width="0.8"/><rect x="1037.80" y="506.12" width="5.70" height="13.01" fill="#8fa9a5"/><rect x="1038.15" y="506.47" width="5.00" height="12.31" fill="none" stroke="rgba(50,40,60,0.34)" stroke-width="0.8"/><rect x="1037.80" y="519.13" width="5.70" height="9.37" fill="#bfbb9f"/><rect x="1038.15" y="519.48" width="5.00" height="8.67" fill="none" stroke="rgba(50,40,60,0.34)" stroke-width="0.8"/><rect x="1038.10" y="496.54" width="5.10" height="31.96" fill="none" stroke="rgba(60,60,80,0.18)" stroke-width="0.6"/><line x1="882.5" y1="290.5" x2="882.5" y2="528.5" stroke="#777" stroke-width="1"/><line x1="963.5" y1="290.5" x2="963.5" y2="528.5" stroke="#777" stroke-width="1"/><clipPath id="cx2"><rect x="634" y="528.5" width="410.5" height="30"/></clipPath><g clip-path="url(#cx2)"><line x1="644.7" y1="528.5" x2="644.7" y2="534.5" stroke="#cfcfcf" stroke-width="1"/><text x="644.7" y="544" class="ax" text-anchor="middle">7 AM</text><line x1="678.9" y1="528.5" x2="678.9" y2="534.5" stroke="#cfcfcf" stroke-width="1"/><text x="678.9" y="544" class="ax" text-anchor="middle">8 AM</text><line x1="713.1" y1="528.5" x2="713.1" y2="534.5" stroke="#cfcfcf" stroke-width="1"/><text x="713.1" y="544" class="ax" text-anchor="middle">9 AM</text><line x1="747.3" y1="528.5" x2="747.3" y2="534.5" stroke="#cfcfcf" stroke-width="1"/><text x="747.3" y="544" class="ax" text-anchor="middle">10 AM</text><line x1="781.5" y1="528.5" x2="781.5" y2="534.5" stroke="#cfcfcf" stroke-width="1"/><text x="781.5" y="544" class="ax" text-anchor="middle">11 AM</text><line x1="815.7" y1="528.5" x2="815.7" y2="534.5" stroke="#cfcfcf" stroke-width="1"/><text x="815.7" y="544" class="ax" text-anchor="middle">12 PM</text><line x1="849.9" y1="528.5" x2="849.9" y2="534.5" stroke="#cfcfcf" stroke-width="1"/><text x="849.9" y="544" class="ax" text-anchor="middle">1 PM</text><line x1="884.1" y1="528.5" x2="884.1" y2="534.5" stroke="#cfcfcf" stroke-width="1"/><text x="884.1" y="544" class="ax" text-anchor="middle">2 PM</text><line x1="918.3" y1="528.5" x2="918.3" y2="534.5" stroke="#cfcfcf" stroke-width="1"/><text x="918.3" y="544" class="ax" text-anchor="middle">3 PM</text><line x1="952.5" y1="528.5" x2="952.5" y2="534.5" stroke="#cfcfcf" stroke-width="1"/><text x="952.5" y="544" class="ax" text-anchor="middle">4 PM</text><line x1="986.7" y1="528.5" x2="986.7" y2="534.5" stroke="#cfcfcf" stroke-width="1"/><text x="986.7" y="544" class="ax" text-anchor="middle">5 PM</text><line x1="1020.9" y1="528.5" x2="1020.9" y2="534.5" stroke="#cfcfcf" stroke-width="1"/><text x="1020.9" y="544" class="ax" text-anchor="middle">6 PM</text></g><rect x="882.5" y="572.2" width="81.0" height="106.3" fill="#e6e6e6"/><line x1="599" y1="572.5" x2="629" y2="572.5" stroke="#c8c8c8" stroke-width="1.2"/><line x1="1050" y1="572.5" x2="1080" y2="572.5" stroke="#c8c8c8" stroke-width="1.2"/><line x1="599" y1="598.5" x2="629" y2="598.5" stroke="#c8c8c8" stroke-width="1.2"/><line x1="1050" y1="598.5" x2="1080" y2="598.5" stroke="#c8c8c8" stroke-width="1.2"/><line x1="599" y1="625.5" x2="629" y2="625.5" stroke="#c8c8c8" stroke-width="1.2"/><line x1="1050" y1="625.5" x2="1080" y2="625.5" stroke="#c8c8c8" stroke-width="1.2"/><line x1="599" y1="652.5" x2="629" y2="652.5" stroke="#c8c8c8" stroke-width="1.2"/><line x1="1050" y1="652.5" x2="1080" y2="652.5" stroke="#c8c8c8" stroke-width="1.2"/><line x1="599" y1="678.5" x2="629" y2="678.5" stroke="#c8c8c8" stroke-width="1.2"/><line x1="1050" y1="678.5" x2="1080" y2="678.5" stroke="#c8c8c8" stroke-width="1.2"/><line x1="634" y1="598.5" x2="1044.5" y2="598.5" stroke="#e9e9e9" stroke-width="1"/><line x1="634" y1="625.5" x2="1044.5" y2="625.5" stroke="#e9e9e9" stroke-width="1"/><line x1="634" y1="652.5" x2="1044.5" y2="652.5" stroke="#e9e9e9" stroke-width="1"/><line x1="634" y1="572.5" x2="1044.5" y2="572.5" stroke="#cccccc" stroke-width="1.1"/><line x1="633.5" y1="572.5" x2="633.5" y2="697" stroke="#cccccc" stroke-width="1.1"/><line x1="1044.5" y1="572.5" x2="1044.5" y2="697" stroke="#cccccc" stroke-width="1.1"/><text x="599" y="586.2" class="ax">100%</text><text x="1079" y="586.2" class="ax" text-anchor="end">100%</text><text x="599" y="612.8" class="ax">75%</text><text x="1079" y="612.8" class="ax" text-anchor="end">75%</text><text x="599" y="639.4" class="ax">50%</text><text x="1079" y="639.4" class="ax" text-anchor="end">50%</text><text x="599" y="666" class="ax">25%</text><text x="1079" y="666" class="ax" text-anchor="end">25%</text><text x="599" y="693.5" class="ax">0%</text><text x="1079" y="693.5" class="ax" text-anchor="end">0%</text><line x1="634" y1="678.5" x2="1044.5" y2="678.5" stroke="#cfcfcf" stroke-width="2"/><clipPath id="cl3o"><rect x="634" y="560" width="248.5" height="130"/><rect x="963.5" y="560" width="100" height="130"/></clipPath><clipPath id="cl3i"><rect x="882.5" y="560" width="81.0" height="130"/></clipPath><polyline points="634.0,677.0 639.1,676.2 644.3,675.8 652.6,675.8 655.6,677.0 661.7,675.8 667.7,677.0 673.7,674.4 690.3,674.4 694.9,673.5 700.9,675.9 723.5,675.9 729.6,674.7 738.6,676.2 747.7,674.4 774.8,674.7 780.9,672.4 791.4,675.0 803.5,670.6 809.5,671.2 815.5,674.7 820.1,675.8 826.1,675.0 832.1,675.9 840.0,675.9 847.5,675.0 855.1,673.5 861.1,674.7 867.2,673.5 873.2,674.7 878.5,674.7 883.0,666.4 883.7,665.3 895.8,662.9 901.8,662.9 906.4,662.2 912.4,661.9 918.4,666.9 924.5,670.6 929.0,670.6 935.0,669.4 942.6,670.9 948.6,670.6 953.1,669.4 958.4,667.2 963.7,668.2 971.2,668.2 975.8,667.2 981.0,667.2 987.1,673.9 992.4,675.8 998.4,676.7 1002.9,675.0 1010.5,675.8 1021.0,675.8 1028.6,674.2 1034.6,675.0 1037.6,677.0" fill="none" stroke="#787d82" stroke-width="2.6" stroke-linejoin="round" clip-path="url(#cl3o)"/><polyline points="634.0,677.0 639.1,676.2 644.3,675.8 652.6,675.8 655.6,677.0 661.7,675.8 667.7,677.0 673.7,674.4 690.3,674.4 694.9,673.5 700.9,675.9 723.5,675.9 729.6,674.7 738.6,676.2 747.7,674.4 774.8,674.7 780.9,672.4 791.4,675.0 803.5,670.6 809.5,671.2 815.5,674.7 820.1,675.8 826.1,675.0 832.1,675.9 840.0,675.9 847.5,675.0 855.1,673.5 861.1,674.7 867.2,673.5 873.2,674.7 878.5,674.7 883.0,666.4 883.7,665.3 895.8,662.9 901.8,662.9 906.4,662.2 912.4,661.9 918.4,666.9 924.5,670.6 929.0,670.6 935.0,669.4 942.6,670.9 948.6,670.6 953.1,669.4 958.4,667.2 963.7,668.2 971.2,668.2 975.8,667.2 981.0,667.2 987.1,673.9 992.4,675.8 998.4,676.7 1002.9,675.0 1010.5,675.8 1021.0,675.8 1028.6,674.2 1034.6,675.0 1037.6,677.0" fill="none" stroke="#1a9be6" stroke-width="2.6" stroke-linejoin="round" clip-path="url(#cl3i)"/><line x1="882.5" y1="572.2" x2="882.5" y2="678.5" stroke="#777" stroke-width="1"/><line x1="963.5" y1="572.2" x2="963.5" y2="678.5" stroke="#777" stroke-width="1"/><clipPath id="cx3"><rect x="634" y="678.5" width="410.5" height="30"/></clipPath><g clip-path="url(#cx3)"><line x1="644.7" y1="678.5" x2="644.7" y2="684.5" stroke="#cfcfcf" stroke-width="1"/><text x="644.7" y="694" class="ax" text-anchor="middle">7 AM</text><line x1="678.9" y1="678.5" x2="678.9" y2="684.5" stroke="#cfcfcf" stroke-width="1"/><text x="678.9" y="694" class="ax" text-anchor="middle">8 AM</text><line x1="713.1" y1="678.5" x2="713.1" y2="684.5" stroke="#cfcfcf" stroke-width="1"/><text x="713.1" y="694" class="ax" text-anchor="middle">9 AM</text><line x1="747.3" y1="678.5" x2="747.3" y2="684.5" stroke="#cfcfcf" stroke-width="1"/><text x="747.3" y="694" class="ax" text-anchor="middle">10 AM</text><line x1="781.5" y1="678.5" x2="781.5" y2="684.5" stroke="#cfcfcf" stroke-width="1"/><text x="781.5" y="694" class="ax" text-anchor="middle">11 AM</text><line x1="815.7" y1="678.5" x2="815.7" y2="684.5" stroke="#cfcfcf" stroke-width="1"/><text x="815.7" y="694" class="ax" text-anchor="middle">12 PM</text><line x1="849.9" y1="678.5" x2="849.9" y2="684.5" stroke="#cfcfcf" stroke-width="1"/><text x="849.9" y="694" class="ax" text-anchor="middle">1 PM</text><line x1="884.1" y1="678.5" x2="884.1" y2="684.5" stroke="#cfcfcf" stroke-width="1"/><text x="884.1" y="694" class="ax" text-anchor="middle">2 PM</text><line x1="918.3" y1="678.5" x2="918.3" y2="684.5" stroke="#cfcfcf" stroke-width="1"/><text x="918.3" y="694" class="ax" text-anchor="middle">3 PM</text><line x1="952.5" y1="678.5" x2="952.5" y2="684.5" stroke="#cfcfcf" stroke-width="1"/><text x="952.5" y="694" class="ax" text-anchor="middle">4 PM</text><line x1="986.7" y1="678.5" x2="986.7" y2="684.5" stroke="#cfcfcf" stroke-width="1"/><text x="986.7" y="694" class="ax" text-anchor="middle">5 PM</text><line x1="1020.9" y1="678.5" x2="1020.9" y2="684.5" stroke="#cfcfcf" stroke-width="1"/><text x="1020.9" y="694" class="ax" text-anchor="middle">6 PM</text></g><rect x="882.5" y="722.5" width="81.0" height="106" fill="#e6e6e6"/><line x1="599" y1="722.5" x2="629" y2="722.5" stroke="#c8c8c8" stroke-width="1.2"/><line x1="1050" y1="722.5" x2="1080" y2="722.5" stroke="#c8c8c8" stroke-width="1.2"/><line x1="599" y1="749.5" x2="629" y2="749.5" stroke="#c8c8c8" stroke-width="1.2"/><line x1="1050" y1="749.5" x2="1080" y2="749.5" stroke="#c8c8c8" stroke-width="1.2"/><line x1="599" y1="775.5" x2="629" y2="775.5" stroke="#c8c8c8" stroke-width="1.2"/><line x1="1050" y1="775.5" x2="1080" y2="775.5" stroke="#c8c8c8" stroke-width="1.2"/><line x1="599" y1="802.5" x2="629" y2="802.5" stroke="#c8c8c8" stroke-width="1.2"/><line x1="1050" y1="802.5" x2="1080" y2="802.5" stroke="#c8c8c8" stroke-width="1.2"/><line x1="599" y1="828.5" x2="629" y2="828.5" stroke="#c8c8c8" stroke-width="1.2"/><line x1="1050" y1="828.5" x2="1080" y2="828.5" stroke="#c8c8c8" stroke-width="1.2"/><line x1="634" y1="749.5" x2="1044.5" y2="749.5" stroke="#e9e9e9" stroke-width="1"/><line x1="634" y1="775.5" x2="1044.5" y2="775.5" stroke="#e9e9e9" stroke-width="1"/><line x1="634" y1="802.5" x2="1044.5" y2="802.5" stroke="#e9e9e9" stroke-width="1"/><line x1="634" y1="722.5" x2="1044.5" y2="722.5" stroke="#cccccc" stroke-width="1.1"/><line x1="633.5" y1="722.5" x2="633.5" y2="848" stroke="#cccccc" stroke-width="1.1"/><line x1="1044.5" y1="722.5" x2="1044.5" y2="848" stroke="#cccccc" stroke-width="1.1"/><text x="599" y="736.5" class="ax">1.71M</text><text x="1050" y="736.5" class="ax">1.71M</text><text x="599" y="763" class="ax">1.42M</text><text x="1050" y="763" class="ax">1.42M</text><text x="599" y="789.5" class="ax">1.13M</text><text x="1050" y="789.5" class="ax">1.13M</text><text x="599" y="816" class="ax">838k</text><text x="1050" y="816" class="ax">838k</text><text x="599" y="843.5" class="ax">548k</text><text x="1050" y="843.5" class="ax">548k</text><line x1="634" y1="828.5" x2="1044.5" y2="828.5" stroke="#cfcfcf" stroke-width="2"/><clipPath id="cl4o"><rect x="634" y="700" width="248.5" height="130"/><rect x="963.5" y="700" width="100" height="130"/></clipPath><clipPath id="cl4i"><rect x="882.5" y="700" width="81.0" height="130"/></clipPath><line x1="634" y1="777.8" x2="1038" y2="774.5" stroke="#787d82" stroke-width="2.4" clip-path="url(#cl4o)"/><line x1="634" y1="777.8" x2="1038" y2="774.5" stroke="#1a9be6" stroke-width="2.4" clip-path="url(#cl4i)"/><line x1="882.5" y1="722.5" x2="882.5" y2="828.5" stroke="#777" stroke-width="1"/><line x1="963.5" y1="722.5" x2="963.5" y2="828.5" stroke="#777" stroke-width="1"/><clipPath id="cx4"><rect x="634" y="828.5" width="410.5" height="30"/></clipPath><g clip-path="url(#cx4)"><line x1="644.7" y1="828.5" x2="644.7" y2="834.5" stroke="#cfcfcf" stroke-width="1"/><text x="644.7" y="844" class="ax" text-anchor="middle">7 AM</text><line x1="678.9" y1="828.5" x2="678.9" y2="834.5" stroke="#cfcfcf" stroke-width="1"/><text x="678.9" y="844" class="ax" text-anchor="middle">8 AM</text><line x1="713.1" y1="828.5" x2="713.1" y2="834.5" stroke="#cfcfcf" stroke-width="1"/><text x="713.1" y="844" class="ax" text-anchor="middle">9 AM</text><line x1="747.3" y1="828.5" x2="747.3" y2="834.5" stroke="#cfcfcf" stroke-width="1"/><text x="747.3" y="844" class="ax" text-anchor="middle">10 AM</text><line x1="781.5" y1="828.5" x2="781.5" y2="834.5" stroke="#cfcfcf" stroke-width="1"/><text x="781.5" y="844" class="ax" text-anchor="middle">11 AM</text><line x1="815.7" y1="828.5" x2="815.7" y2="834.5" stroke="#cfcfcf" stroke-width="1"/><text x="815.7" y="844" class="ax" text-anchor="middle">12 PM</text><line x1="849.9" y1="828.5" x2="849.9" y2="834.5" stroke="#cfcfcf" stroke-width="1"/><text x="849.9" y="844" class="ax" text-anchor="middle">1 PM</text><line x1="884.1" y1="828.5" x2="884.1" y2="834.5" stroke="#cfcfcf" stroke-width="1"/><text x="884.1" y="844" class="ax" text-anchor="middle">2 PM</text><line x1="918.3" y1="828.5" x2="918.3" y2="834.5" stroke="#cfcfcf" stroke-width="1"/><text x="918.3" y="844" class="ax" text-anchor="middle">3 PM</text><line x1="952.5" y1="828.5" x2="952.5" y2="834.5" stroke="#cfcfcf" stroke-width="1"/><text x="952.5" y="844" class="ax" text-anchor="middle">4 PM</text><line x1="986.7" y1="828.5" x2="986.7" y2="834.5" stroke="#cfcfcf" stroke-width="1"/><text x="986.7" y="844" class="ax" text-anchor="middle">5 PM</text><line x1="1020.9" y1="828.5" x2="1020.9" y2="834.5" stroke="#cfcfcf" stroke-width="1"/><text x="1020.9" y="844" class="ax" text-anchor="middle">6 PM</text></g></svg>
<div class="r" style="left:1090px;top:149px;width:45px;height:45px;background:#0a99e8;"></div>
<div class="t" style="top:155.00px;font-size:16px;line-height:16px;color:#fff;font-weight:700;letter-spacing:-0.3px;right:261.5px;margin-right:0.3px;">46.0</div>
<div class="t" style="top:151.00px;font-size:13px;line-height:13px;color:#333;font-weight:700;transform:scaleX(0.9550);transform-origin:0 0;left:1147.4px;">Total Instance Wait Ti...  (seconds)</div>
<div class="t" style="top:168.00px;font-size:11.9px;line-height:11.9px;color:#444;font-weight:400;transform:scaleX(0.8911);transform-origin:0 0;left:1152.6px;">DPASQL2016-1 via AGDB-LIST (DPA_...</div>
<div class="r" style="left:1090px;top:289px;width:45px;height:45px;background:#8c8c8c;"></div>
<div class="t" style="top:295.00px;font-size:16px;line-height:16px;color:#fff;font-weight:700;letter-spacing:-0.3px;right:261.5px;margin-right:0.3px;">92.0</div>
<div class="t" style="top:291.00px;font-size:13px;line-height:13px;color:#333;font-weight:700;transform:scaleX(0.9637);transform-origin:0 0;left:1147.4px;">Wait Time by Wait Type (seconds)</div>
<div class="t" style="top:308.00px;font-size:11.9px;line-height:11.9px;color:#444;font-weight:400;transform:scaleX(0.8911);transform-origin:0 0;left:1152.6px;">DPASQL2016-1 via AGDB-LIST (DPA_...</div>
<div class="r" style="left:1090px;top:572px;width:45px;height:45px;background:#0a99e8;"></div>
<div class="t" style="top:578.00px;font-size:16px;line-height:16px;color:#fff;font-weight:700;letter-spacing:-0.3px;right:261.5px;margin-right:0.3px;">1.00</div>
<div class="t" style="top:600.00px;font-size:11.5px;line-height:11.5px;color:#fff;font-weight:700;letter-spacing:-0.3px;right:261.5px;margin-right:0.3px;">%</div>
<div class="t" style="top:574.00px;font-size:13px;line-height:13px;color:#333;font-weight:700;transform:scaleX(0.9603);transform-origin:0 0;left:1147.4px;">Instance CPU Utilization</div>
<div class="t" style="top:590.00px;font-size:11.9px;line-height:11.9px;color:#444;font-weight:400;transform:scaleX(0.8911);transform-origin:0 0;left:1152.6px;">DPASQL2016-1 via AGDB-LIST (DPA_...</div>
<div class="r" style="left:1090px;top:722px;width:45px;height:45px;background:#0a99e8;"></div>
<div class="t" style="top:728.00px;font-size:16px;line-height:16px;color:#fff;font-weight:700;letter-spacing:-0.3px;right:261.5px;margin-right:0.3px;">1.14</div>
<div class="t" style="top:750.00px;font-size:11.5px;line-height:11.5px;color:#fff;font-weight:700;letter-spacing:-0.3px;right:261.5px;margin-right:0.3px;">M</div>
<div class="t" style="top:724.00px;font-size:13px;line-height:13px;color:#333;font-weight:700;transform:scaleX(0.9261);transform-origin:0 0;left:1147.4px;">Page Life Expectancy (seconds)</div>
<div class="t" style="top:740.00px;font-size:11.9px;line-height:11.9px;color:#444;font-weight:400;transform:scaleX(0.8911);transform-origin:0 0;left:1152.6px;">DPASQL2016-1 via AGDB-LIST (DPA_...</div>
<div class="r" style="left:1090px;top:336px;width:45px;height:14.5px;background:#0a99e8;"></div>
<div class="t" style="top:338.00px;font-size:12px;line-height:12px;color:#fff;font-weight:400;transform:scaleX(0.9118);transform-origin:100% 0;right:261.5px;">14.0</div>
<div class="t" style="top:338.00px;font-size:12.2px;line-height:12.2px;color:#555;font-weight:400;transform:scaleX(0.9229);transform-origin:0 0;left:1152.5px;">Memory/CPU</div>
<div class="r" style="left:1090px;top:353px;width:45px;height:14.5px;background:#f0109a;"></div>
<div class="t" style="top:355.00px;font-size:12px;line-height:12px;color:#fff;font-weight:400;transform:scaleX(0.9118);transform-origin:100% 0;right:261.5px;">14.0</div>
<div class="t" style="top:355.00px;font-size:12.2px;line-height:12.2px;color:#555;font-weight:400;transform:scaleX(0.8187);transform-origin:0 0;left:1152.5px;">LCK_M_IX</div>
<div class="r" style="left:1090px;top:370px;width:45px;height:14.5px;background:#13b5a0;"></div>
<div class="t" style="top:372.00px;font-size:12px;line-height:12px;color:#fff;font-weight:400;transform:scaleX(0.9118);transform-origin:100% 0;right:261.5px;">36.0</div>
<div class="t" style="top:372.00px;font-size:12.2px;line-height:12.2px;color:#555;font-weight:400;transform:scaleX(0.8182);transform-origin:0 0;left:1152.5px;">LCK_M_U</div>
<div class="r" style="left:1090px;top:387px;width:45px;height:14.5px;background:#a052d6;"></div>
<div class="t" style="top:389.00px;font-size:12px;line-height:12px;color:#fff;font-weight:400;transform:scaleX(0.9118);transform-origin:100% 0;right:261.5px;">2.00</div>
<div class="t" style="top:389.00px;font-size:12.2px;line-height:12.2px;color:#555;font-weight:400;transform:scaleX(0.8059);transform-origin:0 0;left:1152.5px;">LCK_M_IS</div>
<div class="r" style="left:1090px;top:404px;width:45px;height:14.5px;background:#b9b922;"></div>
<div class="t" style="top:406.00px;font-size:12px;line-height:12px;color:#fff;font-weight:400;transform:scaleX(0.9118);transform-origin:100% 0;right:261.5px;">24.0</div>
<div class="t" style="top:406.00px;font-size:12.2px;line-height:12.2px;color:#555;font-weight:400;transform:scaleX(0.8101);transform-origin:0 0;left:1152.5px;">LCK_M_S</div>
<div class="r" style="left:1090px;top:421px;width:45px;height:14.5px;background:#ff7000;"></div>
<div class="t" style="top:423.00px;font-size:12px;line-height:12px;color:#fff;font-weight:400;transform:scaleX(0.9118);transform-origin:100% 0;right:261.5px;">0.00</div>
<div class="t" style="top:423.00px;font-size:12.2px;line-height:12.2px;color:#555;font-weight:400;transform:scaleX(0.8267);transform-origin:0 0;left:1152.5px;">WRITELOG</div>
<div class="r" style="left:1090px;top:438px;width:45px;height:14.5px;background:#6464c4;"></div>
<div class="t" style="top:440.00px;font-size:12px;line-height:12px;color:#fff;font-weight:400;transform:scaleX(0.9118);transform-origin:100% 0;right:261.5px;">2.00</div>
<div class="t" style="top:440.00px;font-size:12.2px;line-height:12.2px;color:#555;font-weight:400;transform:scaleX(0.8530);transform-origin:0 0;left:1152.5px;">IO_COMPLETION</div>
<div class="r" style="left:1090px;top:455px;width:45px;height:14.5px;background:#9a4a48;"></div>
<div class="t" style="top:457.00px;font-size:12px;line-height:12px;color:#fff;font-weight:400;transform:scaleX(0.9118);transform-origin:100% 0;right:261.5px;">0.00</div>
<div class="t" style="top:457.00px;font-size:12.2px;line-height:12.2px;color:#555;font-weight:400;transform:scaleX(0.8225);transform-origin:0 0;left:1152.5px;">ASYNC_NETWORK_IO</div>
<div class="r" style="left:1090px;top:472px;width:45px;height:14.5px;background:#c08a30;"></div>
<div class="t" style="top:474.00px;font-size:12px;line-height:12px;color:#fff;font-weight:400;transform:scaleX(0.9118);transform-origin:100% 0;right:261.5px;">0.00</div>
<div class="t" style="top:474.00px;font-size:12.2px;line-height:12.2px;color:#555;font-weight:400;transform:scaleX(0.8067);transform-origin:0 0;left:1152.5px;">PREEMPTIVE_XE_GETTARGETSTATE</div>
<div class="r" style="left:1090px;top:489px;width:45px;height:14.5px;background:#808080;"></div>
<div class="t" style="top:491.00px;font-size:12px;line-height:12px;color:#fff;font-weight:400;transform:scaleX(0.9118);transform-origin:100% 0;right:261.5px;">0.00</div>
<div class="t" style="top:491.00px;font-size:12.2px;line-height:12.2px;color:#555;font-weight:400;transform:scaleX(0.9348);transform-origin:0 0;left:1152.5px;">All others</div>
</body></html>
